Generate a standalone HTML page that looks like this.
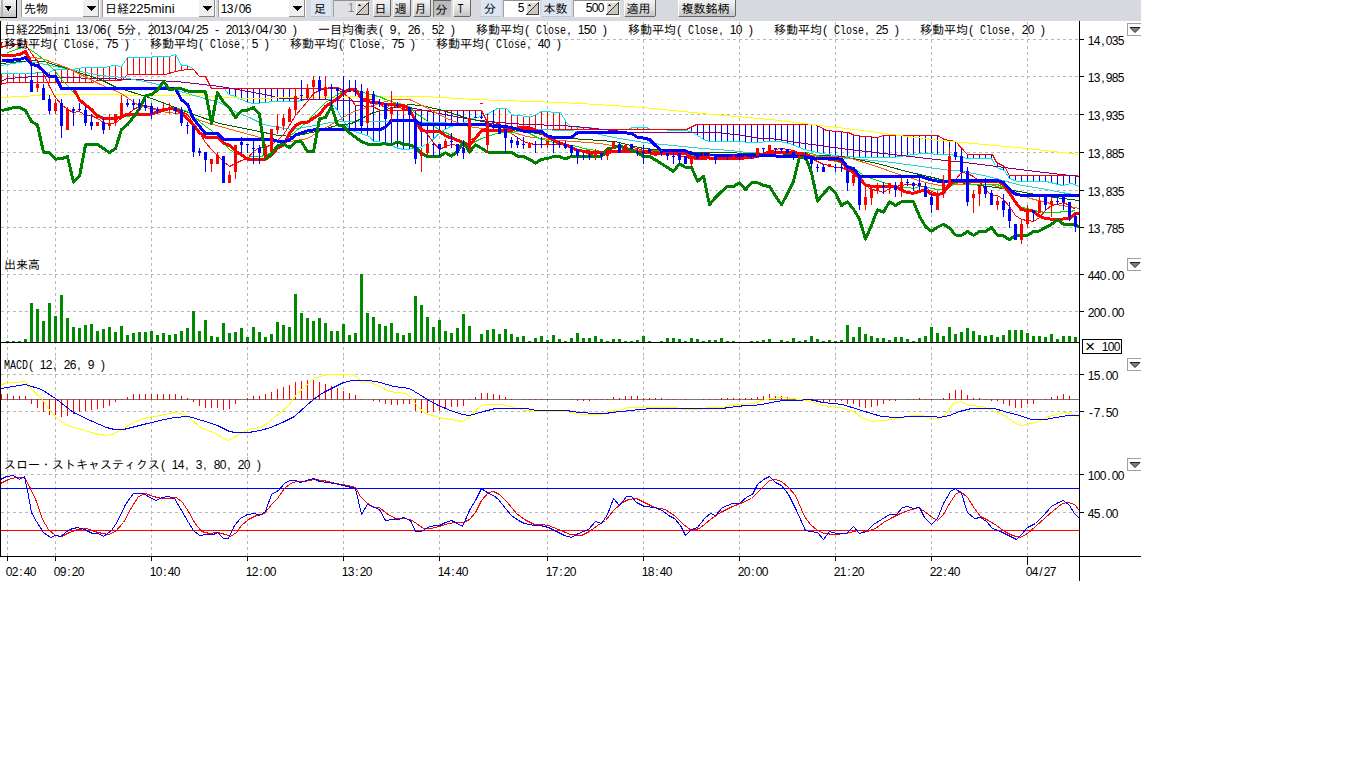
<!DOCTYPE html><html lang="ja"><head><meta charset="utf-8"><title>chart</title>
<style>html,body{margin:0;padding:0;background:#fff;overflow:hidden}svg{display:block}text{font-family:"Liberation Mono","IPAGothic",monospace;font-size:12px;white-space:pre}.dg{font-family:"Liberation Sans","IPAGothic",sans-serif;text-anchor:middle}.ls{font-family:"Liberation Sans","IPAGothic",sans-serif;font-size:13px}</style></head><body>
<svg width="1366" height="768" viewBox="0 0 1366 768" shape-rendering="crispEdges">
<defs><linearGradient id="bg" x1="0" y1="0" x2="0" y2="1"><stop offset="0" stop-color="#f4f4f4"/><stop offset="0.45" stop-color="#e2e2e2"/><stop offset="1" stop-color="#c2c2c2"/></linearGradient><linearGradient id="bgp" x1="0" y1="0" x2="0" y2="1"><stop offset="0" stop-color="#b8b8b8"/><stop offset="1" stop-color="#c4c4c4"/></linearGradient></defs>
<rect x="0" y="0" width="1141" height="21" fill="#d8d9de" />
<rect x="0" y="0" width="17" height="18" fill="url(#bg)" />
<rect x="1" y="0" width="2" height="17" fill="#b4b4b4" />
<line x1="16.5" y1="0" x2="16.5" y2="18" stroke="#000" stroke-width="1" />
<line x1="0" y1="17.5" x2="17" y2="17.5" stroke="#000" stroke-width="1" />
<polygon points="4.6,5.5 12.2,5.5 8.4,11" fill="#000"/>
<rect x="21" y="0" width="79" height="17" fill="#fff" />
<line x1="21.5" y1="0" x2="21.5" y2="17" stroke="#9a9a9a" stroke-width="1" />
<rect x="83" y="0" width="16" height="16" fill="#efefef" />
<line x1="98.5" y1="0" x2="98.5" y2="16" stroke="#8a8a8a" stroke-width="1" />
<line x1="83" y1="16.5" x2="99" y2="16.5" stroke="#8a8a8a" stroke-width="1" />
<polygon points="87,6 96,6 91.5,11" fill="#000"/>
<text y="13" fill="#000" xml:space="preserve"><tspan x="24">先物</tspan></text>
<rect x="102" y="0" width="114" height="17" fill="#fff" />
<line x1="102.5" y1="0" x2="102.5" y2="17" stroke="#9a9a9a" stroke-width="1" />
<rect x="199" y="0" width="16" height="16" fill="#efefef" />
<line x1="214.5" y1="0" x2="214.5" y2="16" stroke="#8a8a8a" stroke-width="1" />
<line x1="199" y1="16.5" x2="215" y2="16.5" stroke="#8a8a8a" stroke-width="1" />
<polygon points="203,6 212,6 207.5,11" fill="#000"/>
<text y="13" fill="#000" xml:space="preserve"><tspan x="105">日経</tspan><tspan x="129" class="ls">225mini</tspan></text>
<rect x="218" y="0" width="88" height="17" fill="#fff" />
<line x1="218.5" y1="0" x2="218.5" y2="17" stroke="#9a9a9a" stroke-width="1" />
<rect x="289" y="0" width="16" height="16" fill="#efefef" />
<line x1="304.5" y1="0" x2="304.5" y2="16" stroke="#8a8a8a" stroke-width="1" />
<line x1="289" y1="16.5" x2="305" y2="16.5" stroke="#8a8a8a" stroke-width="1" />
<polygon points="293,6 302,6 297.5,11" fill="#000"/>
<text y="13" fill="#000" xml:space="preserve"><tspan class="dg" x="224 230 236 242 248">13/06</tspan></text>
<rect x="311" y="0" width="20" height="17" fill="#dde6f3" />
<line x1="311" y1="16.5" x2="331" y2="16.5" stroke="#b5c9e3" stroke-width="1" />
<text y="13" fill="#000" xml:space="preserve"><tspan x="314">足</tspan></text>
<rect x="333" y="0" width="37" height="17" fill="#e0e0e4" />
<line x1="333" y1="0.5" x2="370" y2="0.5" stroke="#909090" stroke-width="1" />
<line x1="333.5" y1="0" x2="333.5" y2="17" stroke="#a0a0a0" stroke-width="1" />
<text y="12" fill="#888" xml:space="preserve"><tspan class="dg" x="351">1</tspan></text>
<rect x="356" y="2" width="13" height="13" fill="#dcd8d0" />
<polygon points="357,14 368,3 368,14" fill="#ccc8c0"/>
<line x1="356.5" y1="2" x2="356.5" y2="15" stroke="#fff" stroke-width="1" />
<line x1="356" y1="2.5" x2="369" y2="2.5" stroke="#fff" stroke-width="1" />
<line x1="368.5" y1="2" x2="368.5" y2="15" stroke="#404040" stroke-width="1" />
<line x1="356" y1="14.5" x2="369" y2="14.5" stroke="#404040" stroke-width="1" />
<line x1="356.5" y1="14.5" x2="368.5" y2="2.5" stroke="#303030" stroke-width="1" shape-rendering="auto"/>
<polygon points="358,6 361,6 359.5,4" fill="#000" shape-rendering="auto"/>
<rect x="373" y="0" width="18" height="17" fill="url(#bg)" />
<line x1="390.5" y1="0" x2="390.5" y2="16" stroke="#686868" stroke-width="1" />
<line x1="374" y1="16.5" x2="390" y2="16.5" stroke="#686868" stroke-width="1" />
<line x1="373.5" y1="0" x2="373.5" y2="16" stroke="#fff" stroke-width="1" />
<text y="13" fill="#000" xml:space="preserve"><tspan x="374.5">日</tspan></text>
<rect x="393" y="0" width="18" height="17" fill="url(#bg)" />
<line x1="410.5" y1="0" x2="410.5" y2="16" stroke="#686868" stroke-width="1" />
<line x1="394" y1="16.5" x2="410" y2="16.5" stroke="#686868" stroke-width="1" />
<line x1="393.5" y1="0" x2="393.5" y2="16" stroke="#fff" stroke-width="1" />
<text y="13" fill="#000" xml:space="preserve"><tspan x="394.5">週</tspan></text>
<rect x="413" y="0" width="18" height="17" fill="url(#bg)" />
<line x1="430.5" y1="0" x2="430.5" y2="16" stroke="#686868" stroke-width="1" />
<line x1="414" y1="16.5" x2="430" y2="16.5" stroke="#686868" stroke-width="1" />
<line x1="413.5" y1="0" x2="413.5" y2="16" stroke="#fff" stroke-width="1" />
<text y="13" fill="#000" xml:space="preserve"><tspan x="414.5">月</tspan></text>
<rect x="433" y="0" width="18" height="17" fill="url(#bgp)" />
<line x1="433.5" y1="0" x2="433.5" y2="17" stroke="#777" stroke-width="1" />
<line x1="433" y1="0.5" x2="451" y2="0.5" stroke="#606060" stroke-width="1" />
<text y="13.5" fill="#000" xml:space="preserve"><tspan x="435.5">分</tspan></text>
<rect x="453" y="0" width="18" height="17" fill="url(#bg)" />
<line x1="470.5" y1="0" x2="470.5" y2="16" stroke="#686868" stroke-width="1" />
<line x1="454" y1="16.5" x2="470" y2="16.5" stroke="#686868" stroke-width="1" />
<line x1="453.5" y1="0" x2="453.5" y2="16" stroke="#fff" stroke-width="1" />
<text y="13" fill="#000" xml:space="preserve"><tspan x="457.5" textLength="6" lengthAdjust="spacingAndGlyphs">T</tspan></text>
<rect x="481" y="0" width="20" height="17" fill="#dde6f3" />
<line x1="481" y1="16.5" x2="501" y2="16.5" stroke="#b5c9e3" stroke-width="1" />
<text y="13" fill="#000" xml:space="preserve"><tspan x="484">分</tspan></text>
<rect x="503" y="0" width="37" height="17" fill="#fff" />
<line x1="503" y1="0.5" x2="540" y2="0.5" stroke="#909090" stroke-width="1" />
<line x1="503.5" y1="0" x2="503.5" y2="17" stroke="#a0a0a0" stroke-width="1" />
<text y="12" fill="#000" xml:space="preserve"><tspan class="dg" x="521">5</tspan></text>
<rect x="526" y="2" width="13" height="13" fill="#dcd8d0" />
<polygon points="527,14 538,3 538,14" fill="#ccc8c0"/>
<line x1="526.5" y1="2" x2="526.5" y2="15" stroke="#fff" stroke-width="1" />
<line x1="526" y1="2.5" x2="539" y2="2.5" stroke="#fff" stroke-width="1" />
<line x1="538.5" y1="2" x2="538.5" y2="15" stroke="#404040" stroke-width="1" />
<line x1="526" y1="14.5" x2="539" y2="14.5" stroke="#404040" stroke-width="1" />
<line x1="526.5" y1="14.5" x2="538.5" y2="2.5" stroke="#303030" stroke-width="1" shape-rendering="auto"/>
<polygon points="528,6 531,6 529.5,4" fill="#000" shape-rendering="auto"/>
<rect x="542" y="0" width="29" height="17" fill="#dde6f3" />
<line x1="542" y1="16.5" x2="571" y2="16.5" stroke="#b5c9e3" stroke-width="1" />
<text y="13" fill="#000" xml:space="preserve"><tspan x="543.5">本数</tspan></text>
<rect x="573" y="0" width="47" height="17" fill="#fff" />
<line x1="573" y1="0.5" x2="620" y2="0.5" stroke="#909090" stroke-width="1" />
<line x1="573.5" y1="0" x2="573.5" y2="17" stroke="#a0a0a0" stroke-width="1" />
<text y="12" fill="#000" xml:space="preserve"><tspan class="dg" x="589 595 601">500</tspan></text>
<rect x="606" y="2" width="13" height="13" fill="#dcd8d0" />
<polygon points="607,14 618,3 618,14" fill="#ccc8c0"/>
<line x1="606.5" y1="2" x2="606.5" y2="15" stroke="#fff" stroke-width="1" />
<line x1="606" y1="2.5" x2="619" y2="2.5" stroke="#fff" stroke-width="1" />
<line x1="618.5" y1="2" x2="618.5" y2="15" stroke="#404040" stroke-width="1" />
<line x1="606" y1="14.5" x2="619" y2="14.5" stroke="#404040" stroke-width="1" />
<line x1="606.5" y1="14.5" x2="618.5" y2="2.5" stroke="#303030" stroke-width="1" shape-rendering="auto"/>
<polygon points="608,6 611,6 609.5,4" fill="#000" shape-rendering="auto"/>
<rect x="624" y="0" width="32" height="17" fill="url(#bg)" />
<line x1="655.5" y1="0" x2="655.5" y2="16" stroke="#686868" stroke-width="1" />
<line x1="625" y1="16.5" x2="655" y2="16.5" stroke="#686868" stroke-width="1" />
<line x1="624.5" y1="0" x2="624.5" y2="16" stroke="#fff" stroke-width="1" />
<text y="13" fill="#000" xml:space="preserve"><tspan x="626.5">適用</tspan></text>
<rect x="678" y="0" width="58" height="17" fill="url(#bg)" />
<line x1="735.5" y1="0" x2="735.5" y2="16" stroke="#686868" stroke-width="1" />
<line x1="679" y1="16.5" x2="735" y2="16.5" stroke="#686868" stroke-width="1" />
<line x1="678.5" y1="0" x2="678.5" y2="16" stroke="#fff" stroke-width="1" />
<text y="13" fill="#000" xml:space="preserve"><tspan x="681.5">複数銘柄</tspan></text>
<line x1="1" y1="39.5" x2="1079" y2="39.5" stroke="#b8b8b8" stroke-width="1" stroke-dasharray="3 3"/>
<line x1="1" y1="76.5" x2="1079" y2="76.5" stroke="#b8b8b8" stroke-width="1" stroke-dasharray="3 3"/>
<line x1="1" y1="114.5" x2="1079" y2="114.5" stroke="#b8b8b8" stroke-width="1" stroke-dasharray="3 3"/>
<line x1="1" y1="152.5" x2="1079" y2="152.5" stroke="#b8b8b8" stroke-width="1" stroke-dasharray="3 3"/>
<line x1="1" y1="190.5" x2="1079" y2="190.5" stroke="#b8b8b8" stroke-width="1" stroke-dasharray="3 3"/>
<line x1="1" y1="227.5" x2="1079" y2="227.5" stroke="#b8b8b8" stroke-width="1" stroke-dasharray="3 3"/>
<line x1="1" y1="274.5" x2="1079" y2="274.5" stroke="#b8b8b8" stroke-width="1" stroke-dasharray="3 3"/>
<line x1="1" y1="311.5" x2="1079" y2="311.5" stroke="#b8b8b8" stroke-width="1" stroke-dasharray="3 3"/>
<line x1="1" y1="374.5" x2="1079" y2="374.5" stroke="#b8b8b8" stroke-width="1" stroke-dasharray="3 3"/>
<line x1="1" y1="411.5" x2="1079" y2="411.5" stroke="#b8b8b8" stroke-width="1" stroke-dasharray="3 3"/>
<line x1="1" y1="474.5" x2="1079" y2="474.5" stroke="#b8b8b8" stroke-width="1" stroke-dasharray="3 3"/>
<line x1="1" y1="512.5" x2="1079" y2="512.5" stroke="#b8b8b8" stroke-width="1" stroke-dasharray="3 3"/>
<line x1="7.5" y1="22" x2="7.5" y2="256" stroke="#b8b8b8" stroke-width="1" stroke-dasharray="3 3"/>
<line x1="7.5" y1="257" x2="7.5" y2="356" stroke="#b8b8b8" stroke-width="1" stroke-dasharray="3 3"/>
<line x1="7.5" y1="357" x2="7.5" y2="456" stroke="#b8b8b8" stroke-width="1" stroke-dasharray="3 3"/>
<line x1="7.5" y1="457" x2="7.5" y2="556" stroke="#b8b8b8" stroke-width="1" stroke-dasharray="3 3"/>
<line x1="55.5" y1="22" x2="55.5" y2="256" stroke="#b8b8b8" stroke-width="1" stroke-dasharray="3 3"/>
<line x1="55.5" y1="257" x2="55.5" y2="356" stroke="#b8b8b8" stroke-width="1" stroke-dasharray="3 3"/>
<line x1="55.5" y1="357" x2="55.5" y2="456" stroke="#b8b8b8" stroke-width="1" stroke-dasharray="3 3"/>
<line x1="55.5" y1="457" x2="55.5" y2="556" stroke="#b8b8b8" stroke-width="1" stroke-dasharray="3 3"/>
<line x1="151.5" y1="22" x2="151.5" y2="256" stroke="#b8b8b8" stroke-width="1" stroke-dasharray="3 3"/>
<line x1="151.5" y1="257" x2="151.5" y2="356" stroke="#b8b8b8" stroke-width="1" stroke-dasharray="3 3"/>
<line x1="151.5" y1="357" x2="151.5" y2="456" stroke="#b8b8b8" stroke-width="1" stroke-dasharray="3 3"/>
<line x1="151.5" y1="457" x2="151.5" y2="556" stroke="#b8b8b8" stroke-width="1" stroke-dasharray="3 3"/>
<line x1="247.5" y1="22" x2="247.5" y2="256" stroke="#b8b8b8" stroke-width="1" stroke-dasharray="3 3"/>
<line x1="247.5" y1="257" x2="247.5" y2="356" stroke="#b8b8b8" stroke-width="1" stroke-dasharray="3 3"/>
<line x1="247.5" y1="357" x2="247.5" y2="456" stroke="#b8b8b8" stroke-width="1" stroke-dasharray="3 3"/>
<line x1="247.5" y1="457" x2="247.5" y2="556" stroke="#b8b8b8" stroke-width="1" stroke-dasharray="3 3"/>
<line x1="343.5" y1="22" x2="343.5" y2="256" stroke="#b8b8b8" stroke-width="1" stroke-dasharray="3 3"/>
<line x1="343.5" y1="257" x2="343.5" y2="356" stroke="#b8b8b8" stroke-width="1" stroke-dasharray="3 3"/>
<line x1="343.5" y1="357" x2="343.5" y2="456" stroke="#b8b8b8" stroke-width="1" stroke-dasharray="3 3"/>
<line x1="343.5" y1="457" x2="343.5" y2="556" stroke="#b8b8b8" stroke-width="1" stroke-dasharray="3 3"/>
<line x1="439.5" y1="22" x2="439.5" y2="256" stroke="#b8b8b8" stroke-width="1" stroke-dasharray="3 3"/>
<line x1="439.5" y1="257" x2="439.5" y2="356" stroke="#b8b8b8" stroke-width="1" stroke-dasharray="3 3"/>
<line x1="439.5" y1="357" x2="439.5" y2="456" stroke="#b8b8b8" stroke-width="1" stroke-dasharray="3 3"/>
<line x1="439.5" y1="457" x2="439.5" y2="556" stroke="#b8b8b8" stroke-width="1" stroke-dasharray="3 3"/>
<line x1="547.5" y1="22" x2="547.5" y2="256" stroke="#b8b8b8" stroke-width="1" stroke-dasharray="3 3"/>
<line x1="547.5" y1="257" x2="547.5" y2="356" stroke="#b8b8b8" stroke-width="1" stroke-dasharray="3 3"/>
<line x1="547.5" y1="357" x2="547.5" y2="456" stroke="#b8b8b8" stroke-width="1" stroke-dasharray="3 3"/>
<line x1="547.5" y1="457" x2="547.5" y2="556" stroke="#b8b8b8" stroke-width="1" stroke-dasharray="3 3"/>
<line x1="643.5" y1="22" x2="643.5" y2="256" stroke="#b8b8b8" stroke-width="1" stroke-dasharray="3 3"/>
<line x1="643.5" y1="257" x2="643.5" y2="356" stroke="#b8b8b8" stroke-width="1" stroke-dasharray="3 3"/>
<line x1="643.5" y1="357" x2="643.5" y2="456" stroke="#b8b8b8" stroke-width="1" stroke-dasharray="3 3"/>
<line x1="643.5" y1="457" x2="643.5" y2="556" stroke="#b8b8b8" stroke-width="1" stroke-dasharray="3 3"/>
<line x1="739.5" y1="22" x2="739.5" y2="256" stroke="#b8b8b8" stroke-width="1" stroke-dasharray="3 3"/>
<line x1="739.5" y1="257" x2="739.5" y2="356" stroke="#b8b8b8" stroke-width="1" stroke-dasharray="3 3"/>
<line x1="739.5" y1="357" x2="739.5" y2="456" stroke="#b8b8b8" stroke-width="1" stroke-dasharray="3 3"/>
<line x1="739.5" y1="457" x2="739.5" y2="556" stroke="#b8b8b8" stroke-width="1" stroke-dasharray="3 3"/>
<line x1="835.5" y1="22" x2="835.5" y2="256" stroke="#b8b8b8" stroke-width="1" stroke-dasharray="3 3"/>
<line x1="835.5" y1="257" x2="835.5" y2="356" stroke="#b8b8b8" stroke-width="1" stroke-dasharray="3 3"/>
<line x1="835.5" y1="357" x2="835.5" y2="456" stroke="#b8b8b8" stroke-width="1" stroke-dasharray="3 3"/>
<line x1="835.5" y1="457" x2="835.5" y2="556" stroke="#b8b8b8" stroke-width="1" stroke-dasharray="3 3"/>
<line x1="931.5" y1="22" x2="931.5" y2="256" stroke="#b8b8b8" stroke-width="1" stroke-dasharray="3 3"/>
<line x1="931.5" y1="257" x2="931.5" y2="356" stroke="#b8b8b8" stroke-width="1" stroke-dasharray="3 3"/>
<line x1="931.5" y1="357" x2="931.5" y2="456" stroke="#b8b8b8" stroke-width="1" stroke-dasharray="3 3"/>
<line x1="931.5" y1="457" x2="931.5" y2="556" stroke="#b8b8b8" stroke-width="1" stroke-dasharray="3 3"/>
<line x1="1027.5" y1="22" x2="1027.5" y2="256" stroke="#b8b8b8" stroke-width="1" stroke-dasharray="3 3"/>
<line x1="1027.5" y1="257" x2="1027.5" y2="356" stroke="#b8b8b8" stroke-width="1" stroke-dasharray="3 3"/>
<line x1="1027.5" y1="357" x2="1027.5" y2="456" stroke="#b8b8b8" stroke-width="1" stroke-dasharray="3 3"/>
<line x1="1027.5" y1="457" x2="1027.5" y2="556" stroke="#b8b8b8" stroke-width="1" stroke-dasharray="3 3"/>
<clipPath id="cp"><rect x="1" y="21" width="1078" height="536"/></clipPath>
<g clip-path="url(#cp)">
<path d="M1.5 73.7V84.2M7.5 73.7V82.4M13.5 73.7V82.4M19.5 73.6V82.4M25.5 73.6V82.4M31.5 73.6V82.4M37.5 72.2V82.4M43.5 72.2V82.4M49.5 71.6V82.4M55.5 69.2V82.4M61.5 69.2V82.4M67.5 69.2V82.4M73.5 69.0V82.4M79.5 67.8V82.4M85.5 67.0V82.4M91.5 67.0V82.4M97.5 67.0V80.1M103.5 67.0V80.1M109.5 65.9V80.1M115.5 65.4V80.1M121.5 66.1V80.1M127.5 57.7V74.4M133.5 57.6V74.4M139.5 57.5V74.4M145.5 57.4V74.4M151.5 57.2V74.4M157.5 56.2V74.4M163.5 56.2V74.4M169.5 56.0V73.2M175.5 54.9V71.4M181.5 65.2V70.8M187.5 65.4V69.2" stroke="#f00" stroke-width="1" fill="none"/>
<path d="M229.5 88.5V94.5M235.5 88.5V96.7M241.5 88.5V99.3M247.5 88.5V102.3M253.5 88.5V103.9M259.5 88.5V103.4M265.5 88.5V102.8M271.5 88.5V101.5M277.5 88.5V101.3M283.5 88.5V101.2M289.5 88.5V101.2M295.5 88.5V101.0M301.5 88.5V100.5M307.5 88.5V99.9M313.5 88.5V99.9M319.5 88.5V99.9M325.5 88.5V99.9M331.5 88.5V104.0M337.5 89.6V111.0M343.5 93.8V122.1M349.5 98.0V128.9M355.5 105.7V132.1M361.5 106.0V134.0M367.5 106.3V136.0M373.5 107.2V141.6M379.5 110.2V141.9M385.5 110.5V142.3M391.5 110.5V145.5M397.5 110.5V148.1M403.5 110.5V149.1M409.5 110.5V148.7M415.5 110.5V148.4M421.5 110.5V146.2M427.5 110.5V143.4M433.5 110.5V138.4M439.5 110.5V133.2M445.5 110.5V129.1M451.5 110.5V126.0M457.5 110.5V124.5M463.5 110.5V122.6M469.5 110.5V119.2M475.5 110.5V117.3M481.5 111.5V115.9M487.5 114.1V123.2" stroke="#00f" stroke-width="1" fill="none"/>
<path d="M493.5 110.8V125.3M499.5 108.8V126.7M505.5 108.8V128.3M511.5 114.9V129.3M517.5 115.6V129.3M523.5 115.8V129.3M529.5 116.0V129.3M535.5 114.4V129.3M541.5 111.7V129.3M547.5 112.0V129.3M553.5 112.2V129.3M559.5 112.5V129.3M565.5 121.9V129.3M571.5 126.6V129.3M577.5 127.5V129.3M583.5 127.6V129.3M589.5 127.1V129.3" stroke="#f00" stroke-width="1" fill="none"/>
<path d="M631.5 127.7V129.3M637.5 127.5V129.3M643.5 127.5V129.3" stroke="#f00" stroke-width="1" fill="none"/>
<path d="M691.5 126.5V131.5M697.5 124.2V135.7M703.5 124.2V139.7M709.5 124.2V141.7M715.5 124.2V141.7M721.5 124.2V141.7M727.5 124.2V141.7M733.5 124.2V141.7M739.5 124.2V141.7M745.5 124.2V142.4M751.5 124.2V142.4M757.5 124.2V142.2M763.5 124.2V142.1M769.5 124.2V141.9M775.5 124.2V141.8M781.5 124.2V142.2M787.5 124.2V143.6M793.5 124.2V145.4M799.5 124.2V147.5M805.5 124.2V149.4M811.5 124.2V150.9M817.5 125.5V152.4M823.5 128.7V153.7M829.5 130.3V154.5M835.5 130.9V155.2M841.5 131.5V156.0M847.5 132.1V156.5M853.5 135.6V156.9M859.5 136.2V157.3M865.5 136.6V157.5M871.5 137.0V157.4M877.5 137.1V157.3M883.5 135.1V157.2M889.5 135.1V157.1M895.5 135.2V156.7M901.5 135.2V156.1M907.5 135.2V155.4M913.5 135.3V154.5M919.5 135.3V153.6M925.5 135.3V153.6M931.5 135.4V154.0M937.5 135.7V154.3M943.5 139.1V154.6M949.5 140.4V154.0M955.5 141.6V155.4M961.5 148.0V157.0M967.5 154.0V158.4M973.5 154.0V158.4M979.5 154.0V158.4M985.5 154.0V158.4M991.5 154.0V159.2M997.5 163.2V168.2M1003.5 166.2V170.0M1009.5 175.3V179.0M1015.5 175.3V180.7M1021.5 175.3V181.2M1027.5 175.3V181.3M1033.5 175.3V181.4M1039.5 175.3V181.5M1045.5 175.3V181.6M1051.5 175.3V182.9M1057.5 175.3V184.3M1063.5 175.3V185.2M1069.5 175.3V183.7M1075.5 175.3V184.9" stroke="#00f" stroke-width="1" fill="none"/>
<polyline points="0.5,73.5 33.5,73.5 37.5,72.5 48.5,72.5 55.5,69.5 72.5,69.5 83.5,67.5 104.5,67.5 113.5,65.5 121.5,66.5 127.5,57.5 151.5,57.5 153.5,56.5 169.5,56.5 175.5,54.5 181.5,65.5 187.5,65.5 192.5,68.5 193.5,69.5 199.5,76.5 205.5,76.5 211.5,88.5 224.5,88.5 228.5,94.5 235.5,96.5 241.5,99.5 248.5,102.5 253.5,103.5 266.5,102.5 272.5,101.5 295.5,101.5 307.5,99.5 328.5,99.5 338.5,111.5 342.5,120.5 351.5,130.5 369.5,136.5 373.5,141.5 386.5,142.5 395.5,147.5 403.5,149.5 417.5,148.5 428.5,143.5 441.5,131.5 450.5,126.5 462.5,123.5 471.5,118.5 481.5,116.5 488.5,113.5 497.5,108.5 506.5,108.5 512.5,115.5 532.5,116.5 541.5,111.5 560.5,112.5 566.5,122.5 570.5,126.5 580.5,127.5 590.5,127.5 595.5,129.5 628.5,129.5 632.5,127.5 646.5,127.5 650.5,129.5 683.5,130.5 691.5,131.5 703.5,139.5 709.5,141.5 743.5,141.5 746.5,142.5 779.5,141.5 789.5,143.5 804.5,149.5 821.5,153.5 842.5,156.5 862.5,157.5 892.5,157.5 906.5,155.5 921.5,153.5 943.5,154.5 950.5,154.5 967.5,158.5 991.5,158.5 996.5,167.5 1004.5,170.5 1009.5,178.5 1017.5,181.5 1046.5,181.5 1062.5,185.5 1071.5,183.5 1079.5,186.5" fill="none" stroke="#00e8e8" stroke-width="1" shape-rendering="crispEdges"/>
<polyline points="0.5,84.5 7.5,82.5 92.5,82.5 97.5,80.5 121.5,80.5 127.5,74.5 165.5,74.5 175.5,71.5 181.5,70.5 187.5,69.5 193.5,69.5 199.5,76.5 205.5,76.5 211.5,88.5 336.5,88.5 350.5,98.5 355.5,105.5 372.5,106.5 380.5,110.5 481.5,110.5 488.5,124.5 497.5,126.5 509.5,129.5 686.5,129.5 696.5,124.5 815.5,124.5 826.5,130.5 848.5,132.5 854.5,135.5 877.5,137.5 883.5,135.5 937.5,135.5 944.5,139.5 955.5,141.5 967.5,154.5 992.5,154.5 996.5,162.5 1004.5,166.5 1009.5,175.5 1076.5,175.5 1079.5,176.5" fill="none" stroke="#ff0000" stroke-width="1" shape-rendering="crispEdges"/>
<polyline points="0.5,81.5 7.5,78.5 22.5,77.5 34.5,76.5 60.5,77.5 100.5,78.5 132.5,79.5 176.5,81.5 220.5,86.5 264.5,94.5 281.5,98.5 316.5,99.5 363.5,101.5 409.5,107.5 439.5,113.5 471.5,119.5 497.5,122.5 526.5,124.5 560.5,125.5 575.5,126.5 631.5,132.5 672.5,132.5 716.5,132.5 743.5,135.5 759.5,138.5 770.5,138.5 804.5,143.5 848.5,149.5 892.5,154.5 936.5,159.5 973.5,163.5 1027.5,170.5 1061.5,174.5 1079.5,176.5" fill="none" stroke="#800080" stroke-width="1" shape-rendering="crispEdges"/>
<polyline points="0.5,97.5 20.5,96.5 39.5,95.5 41.5,94.5 124.5,94.5 126.5,95.5 201.5,95.5 228.5,97.5 249.5,98.5 300.5,97.5 390.5,96.5 424.5,96.5 474.5,99.5 532.5,101.5 580.5,103.5 643.5,107.5 702.5,113.5 770.5,119.5 862.5,130.5 906.5,136.5 950.5,141.5 973.5,143.5 1027.5,148.5 1079.5,154.5" fill="none" stroke="#ffff00" stroke-width="1" shape-rendering="crispEdges"/>
<polyline points="0.5,65.5 25.5,61.5 35.5,62.5 100.5,75.5 123.5,77.5 154.5,83.5 190.5,94.5 219.5,102.5 234.5,111.5 249.5,117.5 263.5,124.5 278.5,127.5 292.5,129.5 314.5,125.5 336.5,121.5 390.5,121.5 402.5,121.5 439.5,122.5 468.5,124.5 500.5,127.5 540.5,129.5 585.5,131.5 614.5,137.5 643.5,142.5 672.5,145.5 702.5,148.5 731.5,150.5 746.5,152.5 800.5,154.5 862.5,159.5 892.5,162.5 921.5,166.5 950.5,170.5 958.5,170.5 988.5,176.5 1017.5,184.5 1046.5,189.5 1061.5,192.5 1079.5,195.5" fill="none" stroke="#30d0d0" stroke-width="1" shape-rendering="crispEdges"/>
<polyline points="0.5,63.5 31.5,60.5 44.5,61.5 100.5,79.5 114.5,86.5 154.5,99.5 190.5,113.5 219.5,123.5 249.5,129.5 278.5,135.5 292.5,136.5 316.5,131.5 336.5,125.5 351.5,123.5 373.5,112.5 390.5,108.5 409.5,104.5 420.5,105.5 439.5,109.5 468.5,118.5 482.5,121.5 526.5,131.5 541.5,134.5 556.5,138.5 570.5,138.5 585.5,139.5 614.5,141.5 643.5,148.5 680.5,151.5 702.5,152.5 770.5,153.5 842.5,156.5 877.5,163.5 906.5,171.5 928.5,176.5 944.5,180.5 973.5,184.5 1002.5,188.5 1024.5,192.5 1046.5,196.5 1079.5,200.5" fill="none" stroke="#006000" stroke-width="1" shape-rendering="crispEdges"/>
<polyline points="0.5,61.5 31.5,57.5 41.5,58.5 66.5,67.5 100.5,84.5 121.5,93.5 138.5,105.5 161.5,111.5 183.5,114.5 209.5,123.5 234.5,130.5 256.5,136.5 270.5,140.5 290.5,141.5 307.5,138.5 317.5,132.5 336.5,121.5 351.5,112.5 366.5,107.5 392.5,99.5 409.5,99.5 424.5,106.5 446.5,118.5 468.5,126.5 482.5,128.5 510.5,131.5 526.5,136.5 541.5,138.5 560.5,140.5 600.5,143.5 640.5,150.5 690.5,153.5 720.5,155.5 770.5,155.5 800.5,155.5 830.5,156.5 845.5,157.5 851.5,158.5 873.5,165.5 899.5,174.5 912.5,178.5 925.5,182.5 940.5,185.5 960.5,184.5 990.5,184.5 1010.5,190.5 1030.5,198.5 1050.5,203.5 1079.5,208.5" fill="none" stroke="#ff6000" stroke-width="1" shape-rendering="crispEdges"/>
<polyline points="7.5,52.5 13.5,50.5 19.5,48.5 25.5,46.5 31.5,50.5 37.5,54.5 43.5,59.5 49.5,65.5 55.5,71.5 61.5,79.5 67.5,85.5 73.5,92.5 79.5,98.5 85.5,106.5 91.5,110.5 97.5,114.5 103.5,117.5 109.5,118.5 115.5,119.5 121.5,117.5 127.5,116.5 133.5,115.5 139.5,115.5 145.5,114.5 151.5,113.5 157.5,111.5 163.5,109.5 169.5,108.5 175.5,107.5 181.5,109.5 187.5,111.5 193.5,116.5 199.5,121.5 205.5,126.5 211.5,130.5 217.5,135.5 223.5,142.5 229.5,149.5 235.5,153.5 241.5,155.5 247.5,157.5 253.5,156.5 259.5,156.5 265.5,155.5 271.5,152.5 277.5,149.5 283.5,143.5 289.5,136.5 295.5,131.5 301.5,126.5 307.5,121.5 313.5,114.5 319.5,108.5 325.5,102.5 331.5,98.5 337.5,94.5 343.5,91.5 349.5,90.5 355.5,89.5 361.5,92.5 367.5,93.5 373.5,95.5 379.5,96.5 385.5,99.5 391.5,101.5 397.5,103.5 403.5,104.5 409.5,106.5 415.5,113.5 421.5,116.5 427.5,121.5 433.5,125.5 439.5,130.5 445.5,132.5 451.5,135.5 457.5,140.5 463.5,145.5 469.5,145.5 475.5,141.5 481.5,138.5 487.5,136.5 493.5,134.5 499.5,132.5 505.5,132.5 511.5,132.5 517.5,131.5 523.5,131.5 529.5,133.5 535.5,136.5 541.5,139.5 547.5,140.5 553.5,142.5 559.5,143.5 565.5,144.5 571.5,145.5 577.5,146.5 583.5,148.5 589.5,149.5 595.5,150.5 601.5,151.5 607.5,151.5 613.5,151.5 619.5,152.5 625.5,152.5 631.5,151.5 637.5,151.5 643.5,150.5 649.5,150.5 655.5,150.5 661.5,150.5 667.5,150.5 673.5,152.5 679.5,153.5 685.5,154.5 691.5,155.5 697.5,156.5 703.5,156.5 709.5,157.5 715.5,157.5 721.5,158.5 727.5,158.5 733.5,158.5 739.5,157.5 745.5,157.5 751.5,157.5 757.5,156.5 763.5,155.5 769.5,154.5 775.5,153.5 781.5,152.5 787.5,151.5 793.5,152.5 799.5,152.5 805.5,152.5 811.5,153.5 817.5,155.5 823.5,157.5 829.5,159.5 835.5,161.5 841.5,162.5 847.5,165.5 853.5,167.5 859.5,172.5 865.5,176.5 871.5,178.5 877.5,180.5 883.5,182.5 889.5,184.5 895.5,186.5 901.5,187.5 907.5,187.5 913.5,188.5 919.5,186.5 925.5,186.5 931.5,188.5 937.5,189.5 943.5,189.5 949.5,186.5 955.5,183.5 961.5,182.5 967.5,183.5 973.5,184.5 979.5,184.5 985.5,184.5 991.5,184.5 997.5,184.5 1003.5,187.5 1009.5,194.5 1015.5,202.5 1021.5,207.5 1027.5,208.5 1033.5,210.5 1039.5,211.5 1045.5,212.5 1051.5,212.5 1057.5,212.5 1063.5,211.5 1069.5,211.5 1075.5,210.5" fill="none" stroke="#00e000" stroke-width="1" shape-rendering="crispEdges"/>
<polyline points="0.5,47.5 7.5,45.5 13.5,44.5 19.5,44.5 25.5,44.5 31.5,53.5 37.5,61.5 43.5,73.5 49.5,86.5 55.5,97.5 61.5,104.5 67.5,109.5 73.5,112.5 79.5,111.5 85.5,115.5 91.5,115.5 97.5,118.5 103.5,122.5 109.5,124.5 115.5,122.5 121.5,118.5 127.5,114.5 133.5,109.5 139.5,106.5 145.5,105.5 151.5,107.5 157.5,109.5 163.5,109.5 169.5,109.5 175.5,110.5 181.5,111.5 187.5,114.5 193.5,123.5 199.5,132.5 205.5,142.5 211.5,149.5 217.5,155.5 223.5,161.5 229.5,166.5 235.5,163.5 241.5,160.5 247.5,158.5 253.5,151.5 259.5,147.5 265.5,147.5 271.5,144.5 277.5,140.5 283.5,134.5 289.5,125.5 295.5,115.5 301.5,108.5 307.5,101.5 313.5,93.5 319.5,90.5 325.5,88.5 331.5,87.5 337.5,87.5 343.5,90.5 349.5,90.5 355.5,91.5 361.5,98.5 367.5,98.5 373.5,100.5 379.5,103.5 385.5,108.5 391.5,104.5 397.5,107.5 403.5,108.5 409.5,110.5 415.5,118.5 421.5,127.5 427.5,134.5 433.5,142.5 439.5,149.5 445.5,146.5 451.5,144.5 457.5,145.5 463.5,147.5 469.5,141.5 475.5,136.5 481.5,131.5 487.5,126.5 493.5,121.5 499.5,124.5 505.5,128.5 511.5,133.5 517.5,137.5 523.5,141.5 529.5,143.5 535.5,144.5 541.5,144.5 547.5,144.5 553.5,144.5 559.5,144.5 565.5,145.5 571.5,146.5 577.5,149.5 583.5,151.5 589.5,154.5 595.5,155.5 601.5,155.5 607.5,154.5 613.5,151.5 619.5,150.5 625.5,149.5 631.5,147.5 637.5,148.5 643.5,150.5 649.5,150.5 655.5,151.5 661.5,152.5 667.5,153.5 673.5,154.5 679.5,155.5 685.5,157.5 691.5,158.5 697.5,159.5 703.5,159.5 709.5,158.5 715.5,157.5 721.5,157.5 727.5,157.5 733.5,157.5 739.5,157.5 745.5,156.5 751.5,156.5 757.5,154.5 763.5,153.5 769.5,151.5 775.5,149.5 781.5,148.5 787.5,149.5 793.5,150.5 799.5,153.5 805.5,155.5 811.5,158.5 817.5,161.5 823.5,164.5 829.5,165.5 835.5,167.5 841.5,167.5 847.5,170.5 853.5,171.5 859.5,179.5 865.5,185.5 871.5,189.5 877.5,190.5 883.5,192.5 889.5,188.5 895.5,186.5 901.5,185.5 907.5,184.5 913.5,184.5 919.5,185.5 925.5,187.5 931.5,191.5 937.5,193.5 943.5,193.5 949.5,187.5 955.5,179.5 961.5,172.5 967.5,173.5 973.5,176.5 979.5,181.5 985.5,189.5 991.5,195.5 997.5,195.5 1003.5,199.5 1009.5,206.5 1015.5,215.5 1021.5,219.5 1027.5,220.5 1033.5,221.5 1039.5,217.5 1045.5,210.5 1051.5,205.5 1057.5,204.5 1063.5,202.5 1069.5,205.5 1075.5,209.5" fill="none" stroke="#ff0000" stroke-width="1" shape-rendering="crispEdges"/>
<polyline points="1.5,56.0 7.5,55.6 13.5,55.2 19.5,54.7 25.5,51.2 31.5,64.0 37.5,66.0 43.5,71.0 49.5,76.5 55.5,76.5 61.5,88.0 67.5,88.5 73.5,88.5 79.5,99.8 85.5,105.0 91.5,109.5 97.5,115.9 103.5,118.5 109.5,118.5 115.5,118.5 121.5,117.0 127.5,114.0 133.5,114.0 139.5,114.0 145.5,114.0 151.5,114.0 157.5,112.0 163.5,110.0 169.5,108.6 175.5,109.3 181.5,113.0 187.5,118.8 193.5,124.8 199.5,132.8 205.5,137.2 211.5,137.2 217.5,137.2 223.5,143.1 229.5,145.3 235.5,151.1 241.5,154.8 247.5,159.2 253.5,159.2 259.5,159.2 265.5,159.2 271.5,155.2 277.5,148.2 283.5,145.3 289.5,133.6 295.5,125.5 301.5,122.6 307.5,122.1 313.5,118.2 319.5,114.5 325.5,106.5 331.5,102.8 337.5,98.4 343.5,93.3 349.5,89.3 355.5,89.3 361.5,98.4 367.5,101.4 373.5,102.8 379.5,102.8 385.5,104.4 391.5,104.8 397.5,105.1 403.5,105.4 409.5,108.8 415.5,121.2 421.5,130.8 427.5,131.2 433.5,131.2 439.5,131.2 445.5,135.9 451.5,138.1 457.5,140.3 463.5,142.5 469.5,145.4 475.5,138.1 481.5,130.8 487.5,130.8 493.5,130.8 499.5,130.8 505.5,130.8 511.5,130.8 517.5,127.8 523.5,127.8 529.5,127.8 535.5,130.0 541.5,133.0 547.5,136.6 553.5,140.3 559.5,143.2 565.5,144.7 571.5,147.6 577.5,150.5 583.5,151.2 589.5,152.0 595.5,152.7 601.5,152.7 607.5,152.0 613.5,151.2 619.5,151.2 625.5,151.2 631.5,151.2 637.5,152.0 643.5,152.7 649.5,153.0 655.5,153.4 661.5,153.0 667.5,153.0 673.5,153.0 679.5,153.0 685.5,153.0 691.5,157.8 697.5,157.9 703.5,157.9 709.5,158.0 715.5,158.9 721.5,158.9 727.5,158.9 733.5,158.9 739.5,158.9 745.5,157.8 751.5,157.3 757.5,156.4 763.5,154.2 769.5,152.0 775.5,152.3 781.5,152.7 787.5,152.7 793.5,152.7 799.5,153.4 805.5,154.2 811.5,157.0 817.5,158.6 823.5,158.8 829.5,159.1 835.5,159.3 841.5,161.5 847.5,168.8 853.5,172.5 859.5,178.3 865.5,184.9 871.5,186.4 877.5,186.4 883.5,186.4 889.5,186.4 895.5,186.4 901.5,190.0 907.5,192.7 913.5,193.2 919.5,191.4 925.5,189.9 931.5,194.3 937.5,195.0 943.5,192.8 949.5,184.0 955.5,181.0 961.5,181.0 967.5,181.0 973.5,181.0 979.5,181.0 985.5,181.0 991.5,181.0 997.5,181.0 1003.5,184.8 1009.5,192.8 1015.5,202.3 1021.5,209.7 1027.5,210.4 1033.5,211.1 1039.5,216.3 1045.5,218.5 1051.5,219.2 1057.5,219.1 1063.5,219.0 1069.5,218.5 1075.5,213.3 1081.5,214.0" fill="none" stroke="#ff0000" stroke-width="3" shape-rendering="crispEdges" stroke-linejoin="round"/>
<polyline points="1.5,60.0 7.5,60.0 13.5,60.0 19.5,59.5 25.5,57.5 31.5,64.5 37.5,65.5 43.5,71.0 49.5,76.5 55.5,76.5 61.5,88.5 67.5,88.5 73.5,88.5 79.5,88.5 85.5,88.5 91.5,88.5 97.5,88.5 103.5,88.5 109.5,88.5 115.5,88.5 121.5,88.5 127.5,88.5 133.5,88.5 139.5,88.5 145.5,88.5 151.5,88.5 157.5,88.5 163.5,88.5 169.5,88.5 175.5,88.5 181.5,99.8 187.5,104.5 193.5,118.9 199.5,126.2 205.5,133.6 211.5,133.6 217.5,133.6 223.5,139.4 229.5,139.4 235.5,139.4 241.5,139.4 247.5,139.4 253.5,139.4 259.5,139.4 265.5,139.4 271.5,139.4 277.5,141.2 283.5,141.2 289.5,140.2 295.5,135.0 301.5,132.8 307.5,130.9 313.5,129.9 319.5,129.9 325.5,129.9 331.5,129.9 337.5,129.9 343.5,129.9 349.5,129.9 355.5,129.9 361.5,129.9 367.5,129.9 373.5,129.9 379.5,129.9 385.5,127.1 391.5,120.5 397.5,120.5 403.5,120.5 409.5,120.5 415.5,120.5 421.5,124.9 427.5,124.9 433.5,124.9 439.5,124.9 445.5,124.9 451.5,124.9 457.5,124.9 463.5,124.9 469.5,124.9 475.5,124.9 481.5,124.9 487.5,124.9 493.5,126.4 499.5,126.4 505.5,126.4 511.5,127.8 517.5,129.3 523.5,131.2 529.5,131.2 535.5,131.2 541.5,131.5 547.5,135.9 553.5,137.6 559.5,137.4 565.5,137.3 571.5,137.1 577.5,132.9 583.5,132.9 589.5,132.9 595.5,132.9 601.5,132.9 607.5,132.9 613.5,132.9 619.5,132.9 625.5,132.9 631.5,133.4 637.5,137.3 643.5,138.1 649.5,139.5 655.5,145.4 661.5,150.5 667.5,150.5 673.5,150.5 679.5,150.5 685.5,151.0 691.5,153.4 697.5,154.9 703.5,154.9 709.5,155.0 715.5,155.0 721.5,155.1 727.5,155.1 733.5,155.2 739.5,155.2 745.5,155.2 751.5,155.3 757.5,155.3 763.5,155.4 769.5,155.4 775.5,156.0 781.5,156.0 787.5,156.0 793.5,156.0 799.5,156.4 805.5,157.1 811.5,157.8 817.5,158.6 823.5,158.6 829.5,158.6 835.5,158.6 841.5,159.3 847.5,167.3 853.5,168.4 859.5,176.6 865.5,176.6 871.5,176.5 877.5,176.5 883.5,176.5 889.5,176.4 895.5,176.4 901.5,176.4 907.5,176.4 913.5,176.3 919.5,176.3 925.5,178.2 931.5,179.9 937.5,181.1 943.5,182.0 949.5,181.0 955.5,180.4 961.5,180.4 967.5,180.4 973.5,180.4 979.5,180.4 985.5,180.4 991.5,180.4 997.5,180.4 1003.5,182.6 1009.5,189.2 1015.5,194.3 1021.5,195.3 1027.5,195.3 1033.5,195.3 1039.5,195.3 1045.5,195.3 1051.5,195.3 1057.5,195.3 1063.5,195.3 1069.5,195.3 1075.5,195.3 1081.5,195.3" fill="none" stroke="#0000ff" stroke-width="3" shape-rendering="crispEdges" stroke-linejoin="round"/>
<polyline points="1.5,110.5 7.5,109.3 13.5,107.6 19.5,107.6 25.5,110.5 31.5,121.5 37.5,125.1 43.5,152.2 49.5,152.7 55.5,159.1 61.5,158.8 67.5,156.6 73.5,182.0 79.5,176.4 85.5,144.9 91.5,144.5 97.5,144.5 103.5,148.6 109.5,152.7 115.5,148.6 121.5,129.5 127.5,124.4 133.5,117.0 139.5,109.0 145.5,95.9 151.5,94.4 157.5,90.0 163.5,81.5 169.5,89.5 175.5,88.8 181.5,88.8 187.5,91.0 193.5,91.4 199.5,91.4 205.5,91.8 211.5,123.3 217.5,92.6 223.5,102.1 229.5,108.0 235.5,117.5 241.5,110.9 247.5,110.1 253.5,107.5 259.5,114.5 265.5,158.5 271.5,154.0 277.5,146.0 283.5,144.1 289.5,147.5 295.5,142.0 301.5,141.6 307.5,151.9 313.5,151.9 319.5,118.9 325.5,117.5 331.5,106.5 337.5,124.8 343.5,126.2 349.5,132.8 355.5,137.2 361.5,141.6 367.5,144.1 373.5,144.1 379.5,144.1 385.5,143.9 391.5,144.7 397.5,141.7 403.5,144.4 409.5,144.7 415.5,147.6 421.5,153.5 427.5,156.4 433.5,156.4 439.5,156.4 445.5,152.7 451.5,156.1 457.5,151.3 463.5,141.7 469.5,152.0 475.5,144.7 481.5,148.3 487.5,152.0 493.5,152.0 499.5,152.0 505.5,152.0 511.5,152.0 517.5,156.1 523.5,156.7 529.5,159.3 535.5,163.0 541.5,159.3 547.5,158.6 553.5,156.4 559.5,156.7 565.5,159.0 571.5,156.4 577.5,156.4 583.5,156.4 589.5,156.4 595.5,156.4 601.5,156.4 607.5,149.0 613.5,147.6 619.5,145.7 625.5,148.3 631.5,149.8 637.5,152.7 643.5,156.4 649.5,156.4 655.5,160.0 661.5,163.7 667.5,167.6 673.5,171.4 679.5,163.7 685.5,167.3 691.5,167.3 697.5,181.3 703.5,176.1 709.5,204.7 715.5,197.4 721.5,191.5 727.5,186.4 733.5,186.4 739.5,182.7 745.5,189.6 751.5,182.7 757.5,182.7 763.5,185.6 769.5,186.4 775.5,195.9 781.5,204.7 787.5,193.7 793.5,181.2 799.5,157.1 805.5,157.1 811.5,172.5 817.5,201.0 823.5,193.7 829.5,187.1 835.5,193.0 841.5,205.4 847.5,201.7 853.5,209.1 859.5,219.3 865.5,239.1 871.5,225.2 877.5,209.8 883.5,212.0 889.5,201.7 895.5,205.4 901.5,201.7 907.5,201.4 913.5,201.7 919.5,216.4 925.5,226.6 931.5,231.3 937.5,227.2 943.5,224.2 949.5,228.0 955.5,235.0 961.5,235.3 967.5,231.6 973.5,235.3 979.5,231.6 985.5,231.6 991.5,227.5 997.5,235.3 1003.5,236.0 1009.5,239.7 1015.5,235.3 1021.5,235.3 1027.5,235.3 1033.5,231.6 1039.5,230.9 1045.5,227.5 1051.5,224.3 1057.5,219.9 1063.5,224.3 1069.5,224.3 1075.5,224.3 1081.5,228.7" fill="none" stroke="#008000" stroke-width="3" shape-rendering="crispEdges" stroke-linejoin="round"/>
<rect x="7" y="42.0" width="1" height="1.3" fill="#0000ff"/><rect x="6" y="42.0" width="3" height="1.3" fill="#0000ff"/>
<rect x="13" y="42.6" width="1" height="3.9" fill="#ff0000"/><rect x="12" y="43.5" width="3" height="2.5" fill="#ff0000"/>
<rect x="19" y="42.8" width="1" height="3.3" fill="#0000ff"/><rect x="18" y="42.8" width="3" height="3.3" fill="#0000ff"/>
<rect x="25" y="39.0" width="1" height="5.8" fill="#ff0000"/><rect x="24" y="43.8" width="3" height="1.0" fill="#ff0000"/>
<rect x="31" y="64.9" width="1" height="26.8" fill="#0000ff"/><rect x="30" y="80.0" width="3" height="11.7" fill="#0000ff"/>
<rect x="37" y="72.0" width="1" height="19.7" fill="#ff0000"/><rect x="36" y="84.0" width="3" height="4.4" fill="#ff0000"/>
<rect x="43" y="84.4" width="1" height="15.4" fill="#0000ff"/><rect x="42" y="87.8" width="3" height="12.0" fill="#0000ff"/>
<rect x="49" y="95.4" width="1" height="19.0" fill="#0000ff"/><rect x="48" y="99.0" width="3" height="11.8" fill="#0000ff"/>
<rect x="55" y="99.0" width="1" height="15.4" fill="#ff0000"/><rect x="54" y="103.0" width="3" height="7.8" fill="#ff0000"/>
<rect x="61" y="99.0" width="1" height="38.8" fill="#0000ff"/><rect x="60" y="103.0" width="3" height="22.8" fill="#0000ff"/>
<rect x="67" y="107.0" width="1" height="22.8" fill="#ff0000"/><rect x="66" y="109.3" width="3" height="20.5" fill="#ff0000"/>
<rect x="73" y="107.0" width="1" height="18.8" fill="#0000ff"/><rect x="72" y="109.3" width="3" height="1.9" fill="#0000ff"/>
<rect x="79" y="102.7" width="1" height="8.1" fill="#0000ff"/><rect x="78" y="109.2" width="3" height="1.0" fill="#0000ff"/>
<rect x="85" y="106.4" width="1" height="19.4" fill="#0000ff"/><rect x="84" y="110.0" width="3" height="12.5" fill="#0000ff"/>
<rect x="91" y="114.4" width="1" height="15.4" fill="#0000ff"/><rect x="90" y="121.7" width="3" height="4.3" fill="#0000ff"/>
<rect x="97" y="121.7" width="1" height="4.1" fill="#ff0000"/><rect x="96" y="121.7" width="3" height="4.1" fill="#ff0000"/>
<rect x="103" y="118.0" width="1" height="15.7" fill="#0000ff"/><rect x="102" y="121.7" width="3" height="8.1" fill="#0000ff"/>
<rect x="109" y="114.4" width="1" height="15.4" fill="#ff0000"/><rect x="108" y="122.5" width="3" height="3.5" fill="#ff0000"/>
<rect x="115" y="114.4" width="1" height="11.4" fill="#ff0000"/><rect x="114" y="114.4" width="3" height="8.1" fill="#ff0000"/>
<rect x="121" y="95.4" width="1" height="22.6" fill="#ff0000"/><rect x="120" y="103.0" width="3" height="15.0" fill="#ff0000"/>
<rect x="127" y="99.0" width="1" height="8.4" fill="#0000ff"/><rect x="126" y="102.7" width="3" height="1.8" fill="#0000ff"/>
<rect x="133" y="99.0" width="1" height="11.0" fill="#0000ff"/><rect x="132" y="102.7" width="3" height="2.3" fill="#0000ff"/>
<rect x="139" y="99.0" width="1" height="11.8" fill="#0000ff"/><rect x="138" y="103.0" width="3" height="4.0" fill="#0000ff"/>
<rect x="145" y="99.0" width="1" height="11.8" fill="#0000ff"/><rect x="144" y="105.0" width="3" height="2.8" fill="#0000ff"/>
<rect x="151" y="103.0" width="1" height="15.5" fill="#0000ff"/><rect x="150" y="106.4" width="3" height="8.0" fill="#0000ff"/>
<rect x="157" y="107.0" width="1" height="7.4" fill="#0000ff"/><rect x="156" y="109.3" width="3" height="1.9" fill="#0000ff"/>
<rect x="163" y="103.4" width="1" height="8.1" fill="#ff0000"/><rect x="162" y="107.8" width="3" height="2.2" fill="#ff0000"/>
<rect x="169" y="103.0" width="1" height="11.4" fill="#ff0000"/><rect x="168" y="106.8" width="3" height="3.2" fill="#ff0000"/>
<rect x="175" y="107.4" width="1" height="7.0" fill="#0000ff"/><rect x="174" y="107.4" width="3" height="3.4" fill="#0000ff"/>
<rect x="181" y="107.0" width="1" height="18.8" fill="#0000ff"/><rect x="180" y="110.0" width="3" height="12.5" fill="#0000ff"/>
<rect x="187" y="121.7" width="1" height="12.0" fill="#0000ff"/><rect x="186" y="124.7" width="3" height="1.3" fill="#0000ff"/>
<rect x="193" y="125.8" width="1" height="30.7" fill="#0000ff"/><rect x="192" y="125.8" width="3" height="26.4" fill="#0000ff"/>
<rect x="199" y="148.2" width="1" height="8.1" fill="#0000ff"/><rect x="198" y="151.0" width="3" height="1.6" fill="#0000ff"/>
<rect x="205" y="151.9" width="1" height="19.7" fill="#0000ff"/><rect x="204" y="151.9" width="3" height="8.0" fill="#0000ff"/>
<rect x="211" y="159.2" width="1" height="12.4" fill="#ff0000"/><rect x="210" y="159.2" width="3" height="4.4" fill="#ff0000"/>
<rect x="217" y="151.9" width="1" height="11.7" fill="#ff0000"/><rect x="216" y="155.2" width="3" height="8.4" fill="#ff0000"/>
<rect x="223" y="155.8" width="1" height="26.8" fill="#0000ff"/><rect x="222" y="155.8" width="3" height="26.8" fill="#0000ff"/>
<rect x="229" y="170.9" width="1" height="11.7" fill="#ff0000"/><rect x="228" y="175.3" width="3" height="7.3" fill="#ff0000"/>
<rect x="235" y="144.5" width="1" height="34.5" fill="#ff0000"/><rect x="234" y="144.5" width="3" height="27.1" fill="#ff0000"/>
<rect x="241" y="137.2" width="1" height="15.4" fill="#0000ff"/><rect x="240" y="141.6" width="3" height="2.9" fill="#0000ff"/>
<rect x="247" y="143.8" width="1" height="8.8" fill="#0000ff"/><rect x="246" y="143.8" width="3" height="1.5" fill="#0000ff"/>
<rect x="253" y="140.9" width="1" height="22.7" fill="#0000ff"/><rect x="252" y="147.5" width="3" height="1.5" fill="#0000ff"/>
<rect x="259" y="144.5" width="1" height="19.1" fill="#0000ff"/><rect x="258" y="148.2" width="3" height="4.4" fill="#0000ff"/>
<rect x="265" y="143.8" width="1" height="15.4" fill="#ff0000"/><rect x="264" y="147.5" width="3" height="9.5" fill="#ff0000"/>
<rect x="271" y="129.2" width="1" height="22.7" fill="#ff0000"/><rect x="270" y="129.2" width="3" height="22.7" fill="#ff0000"/>
<rect x="277" y="113.8" width="1" height="19.8" fill="#ff0000"/><rect x="276" y="125.5" width="3" height="4.4" fill="#ff0000"/>
<rect x="283" y="113.8" width="1" height="16.1" fill="#ff0000"/><rect x="282" y="118.2" width="3" height="7.3" fill="#ff0000"/>
<rect x="289" y="106.5" width="1" height="15.4" fill="#ff0000"/><rect x="288" y="109.4" width="3" height="12.5" fill="#ff0000"/>
<rect x="295" y="88.9" width="1" height="25.6" fill="#ff0000"/><rect x="294" y="95.5" width="3" height="14.6" fill="#ff0000"/>
<rect x="301" y="80.1" width="1" height="21.3" fill="#0000ff"/><rect x="300" y="94.8" width="3" height="1.4" fill="#0000ff"/>
<rect x="307" y="83.8" width="1" height="14.6" fill="#ff0000"/><rect x="306" y="88.2" width="3" height="10.2" fill="#ff0000"/>
<rect x="313" y="75.7" width="1" height="23.5" fill="#ff0000"/><rect x="312" y="80.1" width="3" height="7.3" fill="#ff0000"/>
<rect x="319" y="75.7" width="1" height="22.0" fill="#0000ff"/><rect x="318" y="80.1" width="3" height="11.0" fill="#0000ff"/>
<rect x="325" y="75.7" width="1" height="22.7" fill="#ff0000"/><rect x="324" y="87.4" width="3" height="8.1" fill="#ff0000"/>
<rect x="331" y="83.8" width="1" height="22.7" fill="#0000ff"/><rect x="330" y="87.4" width="3" height="1.5" fill="#0000ff"/>
<rect x="337" y="88.2" width="1" height="21.8" fill="#0000ff"/><rect x="336" y="88.2" width="3" height="2.9" fill="#0000ff"/>
<rect x="343" y="75.7" width="1" height="20.1" fill="#0000ff"/><rect x="342" y="91.0" width="3" height="1.0" fill="#0000ff"/>
<rect x="349" y="80.4" width="1" height="11.1" fill="#0000ff"/><rect x="348" y="90.5" width="3" height="1.0" fill="#0000ff"/>
<rect x="355" y="80.4" width="1" height="15.4" fill="#0000ff"/><rect x="354" y="91.0" width="3" height="1.0" fill="#0000ff"/>
<rect x="361" y="83.8" width="1" height="41.7" fill="#0000ff"/><rect x="360" y="91.1" width="3" height="34.4" fill="#0000ff"/>
<rect x="367" y="88.2" width="1" height="37.3" fill="#ff0000"/><rect x="366" y="91.1" width="3" height="31.5" fill="#ff0000"/>
<rect x="373" y="91.1" width="1" height="16.1" fill="#0000ff"/><rect x="372" y="94.0" width="3" height="9.6" fill="#0000ff"/>
<rect x="379" y="99.0" width="1" height="8.0" fill="#0000ff"/><rect x="378" y="102.0" width="3" height="1.6" fill="#0000ff"/>
<rect x="385" y="102.9" width="1" height="16.1" fill="#0000ff"/><rect x="384" y="102.9" width="3" height="16.1" fill="#0000ff"/>
<rect x="391" y="91.2" width="1" height="30.8" fill="#ff0000"/><rect x="390" y="106.6" width="3" height="7.3" fill="#ff0000"/>
<rect x="397" y="102.0" width="1" height="6.0" fill="#0000ff"/><rect x="396" y="105.0" width="3" height="1.4" fill="#0000ff"/>
<rect x="403" y="104.4" width="1" height="10.4" fill="#ff0000"/><rect x="402" y="104.4" width="3" height="5.9" fill="#ff0000"/>
<rect x="409" y="107.3" width="1" height="7.4" fill="#0000ff"/><rect x="408" y="107.3" width="3" height="7.4" fill="#0000ff"/>
<rect x="415" y="112.5" width="1" height="51.2" fill="#0000ff"/><rect x="414" y="119.0" width="3" height="40.3" fill="#0000ff"/>
<rect x="421" y="148.3" width="1" height="23.5" fill="#ff0000"/><rect x="420" y="152.0" width="3" height="4.4" fill="#ff0000"/>
<rect x="427" y="141.0" width="1" height="15.4" fill="#ff0000"/><rect x="426" y="143.9" width="3" height="8.8" fill="#ff0000"/>
<rect x="433" y="143.0" width="1" height="13.0" fill="#0000ff"/><rect x="432" y="143.5" width="3" height="1.2" fill="#0000ff"/>
<rect x="439" y="143.9" width="1" height="12.5" fill="#0000ff"/><rect x="438" y="143.9" width="3" height="5.1" fill="#0000ff"/>
<rect x="445" y="138.8" width="1" height="9.5" fill="#ff0000"/><rect x="444" y="141.0" width="3" height="7.3" fill="#ff0000"/>
<rect x="451" y="133.0" width="1" height="15.3" fill="#0000ff"/><rect x="450" y="141.0" width="3" height="1.2" fill="#0000ff"/>
<rect x="457" y="143.9" width="1" height="12.5" fill="#0000ff"/><rect x="456" y="143.9" width="3" height="8.8" fill="#0000ff"/>
<rect x="463" y="141.0" width="1" height="18.3" fill="#0000ff"/><rect x="462" y="148.3" width="3" height="4.4" fill="#0000ff"/>
<rect x="469" y="118.3" width="1" height="33.7" fill="#ff0000"/><rect x="468" y="118.3" width="3" height="30.0" fill="#ff0000"/>
<rect x="475" y="112.5" width="1" height="5.8" fill="#0000ff"/><rect x="474" y="116.8" width="3" height="1.2" fill="#0000ff"/>
<rect x="481" y="112.5" width="1" height="6.5" fill="#0000ff"/><rect x="480" y="117.0" width="3" height="1.2" fill="#0000ff"/>
<rect x="487" y="114.7" width="1" height="38.0" fill="#ff0000"/><rect x="486" y="124.2" width="3" height="20.5" fill="#ff0000"/>
<rect x="493" y="110.3" width="1" height="19.0" fill="#0000ff"/><rect x="492" y="126.0" width="3" height="2.0" fill="#0000ff"/>
<rect x="499" y="124.2" width="1" height="9.5" fill="#0000ff"/><rect x="498" y="124.2" width="3" height="9.5" fill="#0000ff"/>
<rect x="505" y="128.6" width="1" height="24.1" fill="#0000ff"/><rect x="504" y="128.6" width="3" height="9.5" fill="#0000ff"/>
<rect x="511" y="136.6" width="1" height="11.7" fill="#0000ff"/><rect x="510" y="140.3" width="3" height="2.9" fill="#0000ff"/>
<rect x="517" y="136.6" width="1" height="11.7" fill="#0000ff"/><rect x="516" y="141.0" width="3" height="3.7" fill="#0000ff"/>
<rect x="523" y="137.3" width="1" height="11.7" fill="#0000ff"/><rect x="522" y="143.9" width="3" height="1.5" fill="#0000ff"/>
<rect x="529" y="141.7" width="1" height="6.6" fill="#ff0000"/><rect x="528" y="143.9" width="3" height="4.4" fill="#ff0000"/>
<rect x="535" y="141.0" width="1" height="11.7" fill="#0000ff"/><rect x="534" y="144.2" width="3" height="1.0" fill="#0000ff"/>
<rect x="541" y="137.3" width="1" height="11.0" fill="#0000ff"/><rect x="540" y="144.2" width="3" height="1.0" fill="#0000ff"/>
<rect x="547" y="141.4" width="1" height="6.9" fill="#ff0000"/><rect x="546" y="141.4" width="3" height="3.3" fill="#ff0000"/>
<rect x="553" y="141.0" width="1" height="11.7" fill="#0000ff"/><rect x="552" y="144.2" width="3" height="1.0" fill="#0000ff"/>
<rect x="559" y="141.0" width="1" height="7.3" fill="#0000ff"/><rect x="558" y="143.9" width="3" height="1.5" fill="#0000ff"/>
<rect x="565" y="141.0" width="1" height="8.0" fill="#0000ff"/><rect x="564" y="143.9" width="3" height="4.4" fill="#0000ff"/>
<rect x="571" y="144.7" width="1" height="11.7" fill="#0000ff"/><rect x="570" y="145.4" width="3" height="7.3" fill="#0000ff"/>
<rect x="577" y="149.0" width="1" height="14.7" fill="#0000ff"/><rect x="576" y="149.0" width="3" height="7.4" fill="#0000ff"/>
<rect x="583" y="152.7" width="1" height="7.3" fill="#0000ff"/><rect x="582" y="155.9" width="3" height="1.0" fill="#0000ff"/>
<rect x="589" y="152.7" width="1" height="7.3" fill="#0000ff"/><rect x="588" y="155.9" width="3" height="1.0" fill="#0000ff"/>
<rect x="595" y="149.0" width="1" height="11.0" fill="#ff0000"/><rect x="594" y="152.7" width="3" height="3.7" fill="#ff0000"/>
<rect x="601" y="152.7" width="1" height="7.3" fill="#0000ff"/><rect x="600" y="152.7" width="3" height="3.7" fill="#0000ff"/>
<rect x="607" y="149.0" width="1" height="11.0" fill="#ff0000"/><rect x="606" y="149.0" width="3" height="7.4" fill="#ff0000"/>
<rect x="613" y="141.7" width="1" height="7.3" fill="#ff0000"/><rect x="612" y="141.7" width="3" height="7.3" fill="#ff0000"/>
<rect x="619" y="141.7" width="1" height="11.0" fill="#0000ff"/><rect x="618" y="143.9" width="3" height="8.8" fill="#0000ff"/>
<rect x="625" y="143.9" width="1" height="8.8" fill="#ff0000"/><rect x="624" y="145.4" width="3" height="5.8" fill="#ff0000"/>
<rect x="631" y="143.9" width="1" height="5.1" fill="#0000ff"/><rect x="630" y="143.9" width="3" height="5.1" fill="#0000ff"/>
<rect x="637" y="149.0" width="1" height="7.4" fill="#0000ff"/><rect x="636" y="151.5" width="3" height="1.0" fill="#0000ff"/>
<rect x="643" y="145.4" width="1" height="18.3" fill="#0000ff"/><rect x="642" y="151.5" width="3" height="1.0" fill="#0000ff"/>
<rect x="649" y="149.0" width="1" height="3.7" fill="#0000ff"/><rect x="648" y="149.0" width="3" height="3.7" fill="#0000ff"/>
<rect x="655" y="152.7" width="1" height="3.7" fill="#ff0000"/><rect x="654" y="152.7" width="3" height="3.7" fill="#ff0000"/>
<rect x="661" y="150.5" width="1" height="5.9" fill="#0000ff"/><rect x="660" y="150.5" width="3" height="2.2" fill="#0000ff"/>
<rect x="667" y="152.7" width="1" height="7.3" fill="#0000ff"/><rect x="666" y="152.7" width="3" height="3.7" fill="#0000ff"/>
<rect x="673" y="152.7" width="1" height="11.0" fill="#0000ff"/><rect x="672" y="155.8" width="3" height="1.0" fill="#0000ff"/>
<rect x="679" y="152.7" width="1" height="11.0" fill="#0000ff"/><rect x="678" y="152.7" width="3" height="7.3" fill="#0000ff"/>
<rect x="685" y="156.4" width="1" height="7.3" fill="#0000ff"/><rect x="684" y="156.4" width="3" height="7.3" fill="#0000ff"/>
<rect x="691" y="157.8" width="1" height="9.5" fill="#ff0000"/><rect x="690" y="157.8" width="3" height="5.9" fill="#ff0000"/>
<rect x="697" y="155.6" width="1" height="3.7" fill="#0000ff"/><rect x="696" y="156.0" width="3" height="2.6" fill="#0000ff"/>
<rect x="703" y="152.7" width="1" height="5.9" fill="#ff0000"/><rect x="702" y="156.4" width="3" height="1.6" fill="#ff0000"/>
<rect x="709" y="152.7" width="1" height="5.9" fill="#ff0000"/><rect x="708" y="156.7" width="3" height="1.3" fill="#ff0000"/>
<rect x="715" y="156.4" width="1" height="7.3" fill="#0000ff"/><rect x="714" y="156.4" width="3" height="3.6" fill="#0000ff"/>
<rect x="721" y="156.7" width="1" height="2.3" fill="#ff0000"/><rect x="720" y="156.7" width="3" height="2.3" fill="#ff0000"/>
<rect x="727" y="156.4" width="1" height="3.6" fill="#0000ff"/><rect x="726" y="155.5" width="3" height="1.4" fill="#0000ff"/>
<rect x="733" y="154.0" width="1" height="4.0" fill="#ff0000"/><rect x="732" y="156.0" width="3" height="2.0" fill="#ff0000"/>
<rect x="739" y="156.4" width="1" height="3.6" fill="#0000ff"/><rect x="738" y="156.0" width="3" height="1.0" fill="#0000ff"/>
<rect x="745" y="155.0" width="1" height="4.0" fill="#ff0000"/><rect x="744" y="156.0" width="3" height="2.0" fill="#ff0000"/>
<rect x="751" y="152.7" width="1" height="6.6" fill="#0000ff"/><rect x="750" y="153.4" width="3" height="3.7" fill="#0000ff"/>
<rect x="757" y="148.3" width="1" height="8.1" fill="#ff0000"/><rect x="756" y="148.3" width="3" height="8.1" fill="#ff0000"/>
<rect x="763" y="148.7" width="1" height="4.7" fill="#0000ff"/><rect x="762" y="148.2" width="3" height="1.0" fill="#0000ff"/>
<rect x="769" y="144.6" width="1" height="8.8" fill="#ff0000"/><rect x="768" y="144.6" width="3" height="8.8" fill="#ff0000"/>
<rect x="775" y="148.7" width="1" height="4.7" fill="#0000ff"/><rect x="774" y="148.2" width="3" height="1.0" fill="#0000ff"/>
<rect x="781" y="147.6" width="1" height="5.8" fill="#0000ff"/><rect x="780" y="148.3" width="3" height="1.5" fill="#0000ff"/>
<rect x="787" y="148.7" width="1" height="4.0" fill="#0000ff"/><rect x="786" y="148.7" width="3" height="4.0" fill="#0000ff"/>
<rect x="793" y="152.0" width="1" height="8.0" fill="#0000ff"/><rect x="792" y="152.0" width="3" height="5.1" fill="#0000ff"/>
<rect x="799" y="154.0" width="1" height="4.0" fill="#ff0000"/><rect x="798" y="156.4" width="3" height="1.6" fill="#ff0000"/>
<rect x="805" y="152.0" width="1" height="8.0" fill="#0000ff"/><rect x="804" y="156.4" width="3" height="3.6" fill="#0000ff"/>
<rect x="811" y="159.3" width="1" height="8.7" fill="#0000ff"/><rect x="810" y="159.3" width="3" height="5.1" fill="#0000ff"/>
<rect x="817" y="163.7" width="1" height="8.0" fill="#0000ff"/><rect x="816" y="167.3" width="3" height="1.0" fill="#0000ff"/>
<rect x="823" y="163.7" width="1" height="8.0" fill="#0000ff"/><rect x="822" y="167.3" width="3" height="4.4" fill="#0000ff"/>
<rect x="829" y="163.7" width="1" height="3.6" fill="#ff0000"/><rect x="828" y="163.7" width="3" height="3.6" fill="#ff0000"/>
<rect x="835" y="163.7" width="1" height="8.0" fill="#0000ff"/><rect x="834" y="166.8" width="3" height="1.0" fill="#0000ff"/>
<rect x="841" y="163.7" width="1" height="8.0" fill="#0000ff"/><rect x="840" y="166.8" width="3" height="1.0" fill="#0000ff"/>
<rect x="847" y="167.3" width="1" height="23.5" fill="#0000ff"/><rect x="846" y="171.0" width="3" height="11.7" fill="#0000ff"/>
<rect x="853" y="171.7" width="1" height="14.7" fill="#ff0000"/><rect x="852" y="175.4" width="3" height="7.3" fill="#ff0000"/>
<rect x="859" y="178.3" width="1" height="31.5" fill="#0000ff"/><rect x="858" y="178.3" width="3" height="27.1" fill="#0000ff"/>
<rect x="865" y="186.4" width="1" height="23.4" fill="#ff0000"/><rect x="864" y="197.3" width="3" height="8.1" fill="#ff0000"/>
<rect x="871" y="186.4" width="1" height="19.0" fill="#ff0000"/><rect x="870" y="188.6" width="3" height="9.4" fill="#ff0000"/>
<rect x="877" y="182.7" width="1" height="11.0" fill="#ff0000"/><rect x="876" y="186.4" width="3" height="3.6" fill="#ff0000"/>
<rect x="883" y="182.0" width="1" height="11.7" fill="#0000ff"/><rect x="882" y="185.9" width="3" height="1.0" fill="#0000ff"/>
<rect x="889" y="182.7" width="1" height="11.0" fill="#ff0000"/><rect x="888" y="182.7" width="3" height="3.7" fill="#ff0000"/>
<rect x="895" y="182.0" width="1" height="15.3" fill="#0000ff"/><rect x="894" y="186.4" width="3" height="3.6" fill="#0000ff"/>
<rect x="901" y="178.3" width="1" height="19.0" fill="#ff0000"/><rect x="900" y="182.0" width="3" height="8.0" fill="#ff0000"/>
<rect x="907" y="178.9" width="1" height="6.6" fill="#0000ff"/><rect x="906" y="182.2" width="3" height="1.0" fill="#0000ff"/>
<rect x="913" y="181.9" width="1" height="8.7" fill="#0000ff"/><rect x="912" y="182.6" width="3" height="3.8" fill="#0000ff"/>
<rect x="919" y="175.4" width="1" height="14.6" fill="#0000ff"/><rect x="918" y="182.6" width="3" height="3.8" fill="#0000ff"/>
<rect x="925" y="182.6" width="1" height="14.7" fill="#0000ff"/><rect x="924" y="186.4" width="3" height="10.9" fill="#0000ff"/>
<rect x="931" y="193.7" width="1" height="19.0" fill="#0000ff"/><rect x="930" y="197.3" width="3" height="8.1" fill="#0000ff"/>
<rect x="937" y="190.6" width="1" height="19.2" fill="#ff0000"/><rect x="936" y="194.4" width="3" height="15.4" fill="#ff0000"/>
<rect x="943" y="175.4" width="1" height="22.2" fill="#ff0000"/><rect x="942" y="182.7" width="3" height="11.7" fill="#ff0000"/>
<rect x="949" y="148.3" width="1" height="34.4" fill="#ff0000"/><rect x="948" y="156.3" width="3" height="26.4" fill="#ff0000"/>
<rect x="955" y="143.1" width="1" height="16.9" fill="#0000ff"/><rect x="954" y="152.0" width="3" height="5.1" fill="#0000ff"/>
<rect x="961" y="150.4" width="1" height="28.5" fill="#0000ff"/><rect x="960" y="156.2" width="3" height="15.4" fill="#0000ff"/>
<rect x="967" y="167.2" width="1" height="38.8" fill="#0000ff"/><rect x="966" y="170.9" width="3" height="30.7" fill="#0000ff"/>
<rect x="973" y="189.9" width="1" height="22.7" fill="#ff0000"/><rect x="972" y="193.6" width="3" height="4.4" fill="#ff0000"/>
<rect x="979" y="185.5" width="1" height="20.5" fill="#ff0000"/><rect x="978" y="185.5" width="3" height="8.1" fill="#ff0000"/>
<rect x="985" y="178.2" width="1" height="19.8" fill="#0000ff"/><rect x="984" y="185.5" width="3" height="8.1" fill="#0000ff"/>
<rect x="991" y="189.9" width="1" height="15.4" fill="#0000ff"/><rect x="990" y="192.8" width="3" height="12.5" fill="#0000ff"/>
<rect x="997" y="197.2" width="1" height="12.5" fill="#ff0000"/><rect x="996" y="200.9" width="3" height="4.4" fill="#ff0000"/>
<rect x="1003" y="193.6" width="1" height="23.4" fill="#0000ff"/><rect x="1002" y="200.9" width="3" height="8.8" fill="#0000ff"/>
<rect x="1009" y="201.6" width="1" height="26.4" fill="#0000ff"/><rect x="1008" y="209.0" width="3" height="12.4" fill="#0000ff"/>
<rect x="1015" y="224.3" width="1" height="15.4" fill="#0000ff"/><rect x="1014" y="224.3" width="3" height="15.4" fill="#0000ff"/>
<rect x="1021" y="219.9" width="1" height="24.1" fill="#ff0000"/><rect x="1020" y="224.3" width="3" height="15.4" fill="#ff0000"/>
<rect x="1027" y="205.3" width="1" height="22.7" fill="#ff0000"/><rect x="1026" y="209.0" width="3" height="15.3" fill="#ff0000"/>
<rect x="1033" y="209.7" width="1" height="10.9" fill="#0000ff"/><rect x="1032" y="209.7" width="3" height="2.9" fill="#0000ff"/>
<rect x="1039" y="197.2" width="1" height="15.4" fill="#ff0000"/><rect x="1038" y="200.9" width="3" height="11.7" fill="#ff0000"/>
<rect x="1045" y="197.2" width="1" height="12.5" fill="#0000ff"/><rect x="1044" y="197.2" width="3" height="8.1" fill="#0000ff"/>
<rect x="1051" y="197.2" width="1" height="19.8" fill="#ff0000"/><rect x="1050" y="200.9" width="3" height="4.4" fill="#ff0000"/>
<rect x="1057" y="197.2" width="1" height="8.1" fill="#0000ff"/><rect x="1056" y="201.1" width="3" height="1.0" fill="#0000ff"/>
<rect x="1063" y="193.6" width="1" height="16.1" fill="#0000ff"/><rect x="1062" y="197.2" width="3" height="4.4" fill="#0000ff"/>
<rect x="1069" y="201.6" width="1" height="19.0" fill="#0000ff"/><rect x="1068" y="201.6" width="3" height="15.4" fill="#0000ff"/>
<rect x="1075" y="212.6" width="1" height="19.0" fill="#0000ff"/><rect x="1074" y="216.3" width="3" height="10.9" fill="#0000ff"/>
<path d="M3 42.5H1.5V47.5H3" fill="none" stroke="#ff0000"/>
<rect x="480" y="103" width="3" height="1" fill="#ff0000"/>
<rect x="6" y="340.8" width="3" height="1.2" fill="#008a00"/>
<rect x="12" y="340.8" width="3" height="1.2" fill="#008a00"/>
<rect x="18" y="340.8" width="3" height="1.2" fill="#008a00"/>
<rect x="24" y="338.8" width="3" height="3.2" fill="#008a00"/>
<rect x="30" y="303.0" width="3" height="39.0" fill="#008a00"/>
<rect x="36" y="309.0" width="3" height="33.0" fill="#008a00"/>
<rect x="42" y="321.0" width="3" height="21.0" fill="#008a00"/>
<rect x="48" y="303.0" width="3" height="39.0" fill="#008a00"/>
<rect x="54" y="316.0" width="3" height="26.0" fill="#008a00"/>
<rect x="60" y="295.0" width="3" height="47.0" fill="#008a00"/>
<rect x="66" y="318.0" width="3" height="24.0" fill="#008a00"/>
<rect x="72" y="327.0" width="3" height="15.0" fill="#008a00"/>
<rect x="78" y="328.0" width="3" height="14.0" fill="#008a00"/>
<rect x="84" y="325.0" width="3" height="17.0" fill="#008a00"/>
<rect x="90" y="324.0" width="3" height="18.0" fill="#008a00"/>
<rect x="96" y="331.0" width="3" height="11.0" fill="#008a00"/>
<rect x="102" y="329.0" width="3" height="13.0" fill="#008a00"/>
<rect x="108" y="327.0" width="3" height="15.0" fill="#008a00"/>
<rect x="114" y="332.0" width="3" height="10.0" fill="#008a00"/>
<rect x="120" y="326.0" width="3" height="16.0" fill="#008a00"/>
<rect x="126" y="335.0" width="3" height="7.0" fill="#008a00"/>
<rect x="132" y="333.0" width="3" height="9.0" fill="#008a00"/>
<rect x="138" y="332.0" width="3" height="10.0" fill="#008a00"/>
<rect x="144" y="332.0" width="3" height="10.0" fill="#008a00"/>
<rect x="150" y="331.0" width="3" height="11.0" fill="#008a00"/>
<rect x="156" y="335.0" width="3" height="7.0" fill="#008a00"/>
<rect x="162" y="333.0" width="3" height="9.0" fill="#008a00"/>
<rect x="168" y="335.0" width="3" height="7.0" fill="#008a00"/>
<rect x="174" y="334.0" width="3" height="8.0" fill="#008a00"/>
<rect x="180" y="331.0" width="3" height="11.0" fill="#008a00"/>
<rect x="186" y="328.0" width="3" height="14.0" fill="#008a00"/>
<rect x="192" y="311.0" width="3" height="31.0" fill="#008a00"/>
<rect x="198" y="331.0" width="3" height="11.0" fill="#008a00"/>
<rect x="204" y="320.0" width="3" height="22.0" fill="#008a00"/>
<rect x="210" y="336.0" width="3" height="6.0" fill="#008a00"/>
<rect x="216" y="337.0" width="3" height="5.0" fill="#008a00"/>
<rect x="222" y="323.0" width="3" height="19.0" fill="#008a00"/>
<rect x="228" y="333.0" width="3" height="9.0" fill="#008a00"/>
<rect x="234" y="332.0" width="3" height="10.0" fill="#008a00"/>
<rect x="240" y="328.0" width="3" height="14.0" fill="#008a00"/>
<rect x="246" y="337.0" width="3" height="5.0" fill="#008a00"/>
<rect x="252" y="327.0" width="3" height="15.0" fill="#008a00"/>
<rect x="258" y="332.0" width="3" height="10.0" fill="#008a00"/>
<rect x="264" y="337.0" width="3" height="5.0" fill="#008a00"/>
<rect x="270" y="334.0" width="3" height="8.0" fill="#008a00"/>
<rect x="276" y="322.0" width="3" height="20.0" fill="#008a00"/>
<rect x="282" y="325.0" width="3" height="17.0" fill="#008a00"/>
<rect x="288" y="327.0" width="3" height="15.0" fill="#008a00"/>
<rect x="294" y="294.0" width="3" height="48.0" fill="#008a00"/>
<rect x="300" y="313.0" width="3" height="29.0" fill="#008a00"/>
<rect x="306" y="318.0" width="3" height="24.0" fill="#008a00"/>
<rect x="312" y="321.0" width="3" height="21.0" fill="#008a00"/>
<rect x="318" y="318.0" width="3" height="24.0" fill="#008a00"/>
<rect x="324" y="323.0" width="3" height="19.0" fill="#008a00"/>
<rect x="330" y="331.0" width="3" height="11.0" fill="#008a00"/>
<rect x="336" y="331.0" width="3" height="11.0" fill="#008a00"/>
<rect x="342" y="324.0" width="3" height="18.0" fill="#008a00"/>
<rect x="348" y="335.0" width="3" height="7.0" fill="#008a00"/>
<rect x="354" y="333.0" width="3" height="9.0" fill="#008a00"/>
<rect x="360" y="274.0" width="3" height="68.0" fill="#008a00"/>
<rect x="366" y="313.0" width="3" height="29.0" fill="#008a00"/>
<rect x="372" y="317.0" width="3" height="25.0" fill="#008a00"/>
<rect x="378" y="324.0" width="3" height="18.0" fill="#008a00"/>
<rect x="384" y="326.0" width="3" height="16.0" fill="#008a00"/>
<rect x="390" y="323.0" width="3" height="19.0" fill="#008a00"/>
<rect x="396" y="333.0" width="3" height="9.0" fill="#008a00"/>
<rect x="402" y="335.0" width="3" height="7.0" fill="#008a00"/>
<rect x="408" y="333.0" width="3" height="9.0" fill="#008a00"/>
<rect x="414" y="296.0" width="3" height="46.0" fill="#008a00"/>
<rect x="420" y="305.0" width="3" height="37.0" fill="#008a00"/>
<rect x="426" y="317.0" width="3" height="25.0" fill="#008a00"/>
<rect x="432" y="327.0" width="3" height="15.0" fill="#008a00"/>
<rect x="438" y="320.0" width="3" height="22.0" fill="#008a00"/>
<rect x="444" y="331.0" width="3" height="11.0" fill="#008a00"/>
<rect x="450" y="333.0" width="3" height="9.0" fill="#008a00"/>
<rect x="456" y="328.0" width="3" height="14.0" fill="#008a00"/>
<rect x="462" y="314.0" width="3" height="28.0" fill="#008a00"/>
<rect x="468" y="326.0" width="3" height="16.0" fill="#008a00"/>
<rect x="480" y="334.0" width="3" height="8.0" fill="#008a00"/>
<rect x="486" y="330.0" width="3" height="12.0" fill="#008a00"/>
<rect x="492" y="329.0" width="3" height="13.0" fill="#008a00"/>
<rect x="498" y="334.0" width="3" height="8.0" fill="#008a00"/>
<rect x="504" y="329.0" width="3" height="13.0" fill="#008a00"/>
<rect x="510" y="334.0" width="3" height="8.0" fill="#008a00"/>
<rect x="516" y="337.0" width="3" height="5.0" fill="#008a00"/>
<rect x="522" y="336.0" width="3" height="6.0" fill="#008a00"/>
<rect x="528" y="341.0" width="3" height="1.0" fill="#008a00"/>
<rect x="534" y="338.0" width="3" height="4.0" fill="#008a00"/>
<rect x="540" y="336.0" width="3" height="6.0" fill="#008a00"/>
<rect x="546" y="340.0" width="3" height="2.0" fill="#008a00"/>
<rect x="552" y="335.0" width="3" height="7.0" fill="#008a00"/>
<rect x="558" y="339.0" width="3" height="3.0" fill="#008a00"/>
<rect x="564" y="341.0" width="3" height="1.0" fill="#008a00"/>
<rect x="570" y="338.0" width="3" height="4.0" fill="#008a00"/>
<rect x="576" y="333.0" width="3" height="9.0" fill="#008a00"/>
<rect x="582" y="338.0" width="3" height="4.0" fill="#008a00"/>
<rect x="588" y="338.0" width="3" height="4.0" fill="#008a00"/>
<rect x="594" y="336.0" width="3" height="6.0" fill="#008a00"/>
<rect x="600" y="339.0" width="3" height="3.0" fill="#008a00"/>
<rect x="606" y="341.0" width="3" height="1.0" fill="#008a00"/>
<rect x="612" y="339.0" width="3" height="3.0" fill="#008a00"/>
<rect x="618" y="339.0" width="3" height="3.0" fill="#008a00"/>
<rect x="624" y="341.0" width="3" height="1.0" fill="#008a00"/>
<rect x="630" y="341.0" width="3" height="1.0" fill="#008a00"/>
<rect x="636" y="340.0" width="3" height="2.0" fill="#008a00"/>
<rect x="642" y="336.0" width="3" height="6.0" fill="#008a00"/>
<rect x="648" y="341.0" width="3" height="1.0" fill="#008a00"/>
<rect x="660" y="341.0" width="3" height="1.0" fill="#008a00"/>
<rect x="666" y="338.0" width="3" height="4.0" fill="#008a00"/>
<rect x="672" y="338.0" width="3" height="4.0" fill="#008a00"/>
<rect x="678" y="339.0" width="3" height="3.0" fill="#008a00"/>
<rect x="684" y="341.0" width="3" height="1.0" fill="#008a00"/>
<rect x="690" y="338.0" width="3" height="4.0" fill="#008a00"/>
<rect x="696" y="339.0" width="3" height="3.0" fill="#008a00"/>
<rect x="702" y="341.0" width="3" height="1.0" fill="#008a00"/>
<rect x="708" y="340.0" width="3" height="2.0" fill="#008a00"/>
<rect x="714" y="340.0" width="3" height="2.0" fill="#008a00"/>
<rect x="720" y="338.0" width="3" height="4.0" fill="#008a00"/>
<rect x="726" y="341.0" width="3" height="1.0" fill="#008a00"/>
<rect x="732" y="341.0" width="3" height="1.0" fill="#008a00"/>
<rect x="750" y="341.0" width="3" height="1.0" fill="#008a00"/>
<rect x="756" y="341.0" width="3" height="1.0" fill="#008a00"/>
<rect x="762" y="340.0" width="3" height="2.0" fill="#008a00"/>
<rect x="768" y="339.0" width="3" height="3.0" fill="#008a00"/>
<rect x="780" y="340.0" width="3" height="2.0" fill="#008a00"/>
<rect x="786" y="341.0" width="3" height="1.0" fill="#008a00"/>
<rect x="792" y="338.0" width="3" height="4.0" fill="#008a00"/>
<rect x="798" y="341.0" width="3" height="1.0" fill="#008a00"/>
<rect x="804" y="340.0" width="3" height="2.0" fill="#008a00"/>
<rect x="810" y="336.0" width="3" height="6.0" fill="#008a00"/>
<rect x="816" y="339.0" width="3" height="3.0" fill="#008a00"/>
<rect x="822" y="341.0" width="3" height="1.0" fill="#008a00"/>
<rect x="828" y="340.0" width="3" height="2.0" fill="#008a00"/>
<rect x="834" y="341.0" width="3" height="1.0" fill="#008a00"/>
<rect x="840" y="340.0" width="3" height="2.0" fill="#008a00"/>
<rect x="846" y="325.0" width="3" height="17.0" fill="#008a00"/>
<rect x="852" y="337.0" width="3" height="5.0" fill="#008a00"/>
<rect x="858" y="327.0" width="3" height="15.0" fill="#008a00"/>
<rect x="864" y="334.0" width="3" height="8.0" fill="#008a00"/>
<rect x="870" y="336.0" width="3" height="6.0" fill="#008a00"/>
<rect x="876" y="338.0" width="3" height="4.0" fill="#008a00"/>
<rect x="882" y="338.0" width="3" height="4.0" fill="#008a00"/>
<rect x="888" y="340.0" width="3" height="2.0" fill="#008a00"/>
<rect x="894" y="337.0" width="3" height="5.0" fill="#008a00"/>
<rect x="900" y="337.0" width="3" height="5.0" fill="#008a00"/>
<rect x="906" y="339.0" width="3" height="3.0" fill="#008a00"/>
<rect x="912" y="341.0" width="3" height="1.0" fill="#008a00"/>
<rect x="918" y="338.0" width="3" height="4.0" fill="#008a00"/>
<rect x="924" y="336.0" width="3" height="6.0" fill="#008a00"/>
<rect x="930" y="327.0" width="3" height="15.0" fill="#008a00"/>
<rect x="936" y="333.0" width="3" height="9.0" fill="#008a00"/>
<rect x="942" y="336.0" width="3" height="6.0" fill="#008a00"/>
<rect x="948" y="327.0" width="3" height="15.0" fill="#008a00"/>
<rect x="954" y="334.0" width="3" height="8.0" fill="#008a00"/>
<rect x="960" y="332.0" width="3" height="10.0" fill="#008a00"/>
<rect x="966" y="328.0" width="3" height="14.0" fill="#008a00"/>
<rect x="972" y="331.0" width="3" height="11.0" fill="#008a00"/>
<rect x="978" y="335.0" width="3" height="7.0" fill="#008a00"/>
<rect x="984" y="336.0" width="3" height="6.0" fill="#008a00"/>
<rect x="990" y="335.0" width="3" height="7.0" fill="#008a00"/>
<rect x="996" y="337.0" width="3" height="5.0" fill="#008a00"/>
<rect x="1002" y="335.0" width="3" height="7.0" fill="#008a00"/>
<rect x="1008" y="330.0" width="3" height="12.0" fill="#008a00"/>
<rect x="1014" y="330.0" width="3" height="12.0" fill="#008a00"/>
<rect x="1020" y="330.0" width="3" height="12.0" fill="#008a00"/>
<rect x="1026" y="333.0" width="3" height="9.0" fill="#008a00"/>
<rect x="1032" y="336.0" width="3" height="6.0" fill="#008a00"/>
<rect x="1038" y="336.0" width="3" height="6.0" fill="#008a00"/>
<rect x="1044" y="337.0" width="3" height="5.0" fill="#008a00"/>
<rect x="1050" y="334.0" width="3" height="8.0" fill="#008a00"/>
<rect x="1056" y="339.0" width="3" height="3.0" fill="#008a00"/>
<rect x="1062" y="336.0" width="3" height="6.0" fill="#008a00"/>
<rect x="1068" y="336.0" width="3" height="6.0" fill="#008a00"/>
<rect x="1074" y="337.0" width="3" height="5.0" fill="#008a00"/>
<line x1="1" y1="399.5" x2="1079" y2="399.5" stroke="#787878" stroke-width="1"/>
<path d="M1.5 394V400M7.5 394V400M13.5 396V400M19.5 396V400M25.5 396V400M31.5 399V404M37.5 399V408M43.5 399V412M49.5 399V415M55.5 399V415M61.5 399V417M67.5 399V416M73.5 399V414M79.5 399V412M85.5 399V411M91.5 399V410M97.5 399V409M103.5 399V408M109.5 399V406M115.5 399V402M121.5 399V400M127.5 397V400M133.5 394V400M139.5 394V400M145.5 394V400M151.5 394V400M157.5 394V400M163.5 394V400M169.5 394V400M175.5 394V400M181.5 396V400M187.5 398V400M193.5 399V402M199.5 399V406M205.5 399V408M211.5 399V408M217.5 399V408M223.5 399V410M229.5 399V409M235.5 399V404M247.5 398V400M253.5 396V400M259.5 396V400M265.5 394V400M271.5 392V400M277.5 389V400M283.5 387V400M289.5 385V400M295.5 382V400M301.5 381V400M307.5 380V400M313.5 380V400M319.5 382V400M325.5 384V400M331.5 386V400M337.5 388V400M343.5 391V400M349.5 393V400M355.5 395V400M361.5 399V400M373.5 399V401M379.5 399V402M385.5 399V404M391.5 399V405M397.5 399V405M403.5 399V404M409.5 399V404M415.5 399V411M421.5 399V413M427.5 399V413M433.5 399V412M439.5 399V411M445.5 399V409M451.5 399V407M457.5 399V407M463.5 399V406M469.5 399V400M475.5 397V400M481.5 393V400M487.5 393V400M493.5 394V400M499.5 395V400M505.5 397V400M511.5 399V400M523.5 399V400M529.5 399V400M535.5 399V400M541.5 399V400M547.5 399V400M571.5 399V400M577.5 399V401M583.5 399V401M589.5 399V401M595.5 399V400M601.5 399V400M607.5 399V400M613.5 397V400M619.5 398V400M625.5 396V400M631.5 396V400M637.5 396V400M643.5 398V400M649.5 398V400M655.5 398V400M661.5 398V400M667.5 399V400M673.5 399V400M685.5 399V400M703.5 399V400M709.5 399V400M715.5 399V400M721.5 398V400M727.5 398V400M733.5 398V400M739.5 398V400M745.5 398V400M751.5 398V400M757.5 397V400M763.5 396V400M769.5 394V400M775.5 396V400M781.5 396V400M787.5 397V400M793.5 398V400M799.5 399V400M811.5 399V401M817.5 399V401M823.5 399V402M829.5 399V402M835.5 399V402M841.5 399V401M847.5 399V404M853.5 399V404M859.5 399V407M865.5 399V408M871.5 399V407M877.5 399V406M883.5 399V404M889.5 399V401M895.5 399V401M907.5 399V400M913.5 399V400M919.5 398V400M925.5 399V400M931.5 399V400M943.5 398V400M949.5 393V400M955.5 390V400M961.5 390V400M967.5 395V400M973.5 398V400M979.5 398V400M985.5 399V400M991.5 399V401M997.5 399V401M1003.5 399V404M1009.5 399V406M1015.5 399V408M1021.5 399V408M1027.5 399V404M1033.5 399V404M1045.5 399V400M1051.5 397V400M1057.5 396V400M1063.5 394V400M1069.5 396V400" stroke="#ff0000" stroke-width="1" fill="none"/>
<polyline points="0.5,384.5 12.5,382.5 25.5,381.5 30.5,388.5 41.5,398.5 51.5,412.5 59.5,420.5 69.5,426.5 82.5,429.5 94.5,433.5 106.5,435.5 112.5,434.5 123.5,428.5 131.5,423.5 143.5,418.5 159.5,415.5 174.5,412.5 184.5,414.5 190.5,418.5 200.5,427.5 215.5,433.5 223.5,438.5 228.5,440.5 235.5,436.5 248.5,429.5 260.5,427.5 268.5,422.5 280.5,412.5 288.5,405.5 296.5,394.5 304.5,387.5 313.5,378.5 327.5,374.5 352.5,374.5 357.5,377.5 361.5,382.5 368.5,381.5 380.5,386.5 388.5,391.5 405.5,393.5 411.5,397.5 417.5,406.5 425.5,413.5 438.5,417.5 450.5,419.5 462.5,421.5 469.5,417.5 479.5,406.5 485.5,404.5 501.5,404.5 511.5,406.5 524.5,410.5 536.5,411.5 568.5,411.5 574.5,413.5 583.5,414.5 601.5,414.5 609.5,411.5 622.5,409.5 628.5,407.5 675.5,407.5 683.5,409.5 699.5,409.5 708.5,407.5 722.5,407.5 730.5,405.5 740.5,404.5 753.5,403.5 761.5,400.5 771.5,398.5 781.5,397.5 792.5,398.5 804.5,400.5 810.5,401.5 822.5,405.5 840.5,407.5 853.5,411.5 861.5,417.5 871.5,421.5 883.5,420.5 898.5,418.5 912.5,415.5 922.5,415.5 930.5,418.5 938.5,418.5 945.5,414.5 953.5,403.5 960.5,401.5 969.5,405.5 982.5,406.5 994.5,411.5 1004.5,415.5 1015.5,423.5 1021.5,425.5 1035.5,422.5 1049.5,416.5 1064.5,412.5 1074.5,414.5 1079.5,417.5" fill="none" stroke="#ffff00" stroke-width="1" shape-rendering="crispEdges"/>
<polyline points="0.5,388.5 25.5,384.5 41.5,389.5 55.5,398.5 73.5,412.5 92.5,421.5 106.5,427.5 114.5,429.5 123.5,429.5 143.5,424.5 164.5,419.5 174.5,417.5 188.5,416.5 205.5,421.5 217.5,425.5 229.5,431.5 235.5,432.5 248.5,432.5 260.5,430.5 270.5,427.5 282.5,422.5 294.5,416.5 306.5,405.5 313.5,399.5 323.5,392.5 335.5,386.5 343.5,382.5 352.5,380.5 368.5,380.5 380.5,382.5 393.5,386.5 409.5,388.5 419.5,394.5 427.5,399.5 438.5,405.5 450.5,410.5 462.5,414.5 469.5,415.5 483.5,411.5 495.5,408.5 526.5,408.5 536.5,410.5 544.5,410.5 568.5,410.5 570.5,411.5 581.5,412.5 593.5,413.5 607.5,413.5 609.5,412.5 622.5,411.5 630.5,410.5 640.5,409.5 652.5,408.5 724.5,408.5 726.5,407.5 740.5,406.5 742.5,405.5 753.5,405.5 761.5,404.5 771.5,402.5 783.5,400.5 796.5,400.5 810.5,399.5 822.5,402.5 842.5,404.5 861.5,410.5 881.5,416.5 896.5,417.5 912.5,416.5 933.5,416.5 939.5,417.5 949.5,415.5 959.5,411.5 971.5,408.5 994.5,408.5 1004.5,411.5 1019.5,415.5 1031.5,419.5 1045.5,419.5 1055.5,417.5 1068.5,415.5 1079.5,415.5" fill="none" stroke="#0000ff" stroke-width="1" shape-rendering="crispEdges"/>
<line x1="1" y1="488.5" x2="1079" y2="488.5" stroke="#0000ff" stroke-width="1"/>
<line x1="1" y1="530.5" x2="1079" y2="530.5" stroke="#ff0000" stroke-width="1"/>
<polyline points="0.5,483.5 8.5,479.5 15.5,477.5 24.5,477.5 30.5,488.5 36.5,501.5 42.5,519.5 48.5,529.5 55.5,535.5 61.5,536.5 69.5,532.5 77.5,529.5 86.5,528.5 94.5,531.5 102.5,533.5 108.5,534.5 115.5,531.5 123.5,522.5 131.5,507.5 138.5,496.5 145.5,493.5 153.5,496.5 161.5,498.5 170.5,498.5 176.5,497.5 182.5,502.5 188.5,511.5 194.5,522.5 201.5,531.5 209.5,533.5 217.5,532.5 225.5,534.5 230.5,536.5 236.5,532.5 241.5,525.5 248.5,519.5 256.5,515.5 264.5,513.5 271.5,504.5 277.5,498.5 284.5,488.5 290.5,483.5 296.5,481.5 304.5,481.5 314.5,479.5 323.5,480.5 335.5,483.5 347.5,485.5 355.5,487.5 360.5,496.5 367.5,503.5 374.5,507.5 379.5,507.5 386.5,513.5 395.5,518.5 403.5,518.5 410.5,519.5 416.5,523.5 423.5,528.5 430.5,528.5 439.5,526.5 448.5,523.5 456.5,522.5 463.5,522.5 469.5,519.5 475.5,512.5 481.5,500.5 488.5,492.5 493.5,491.5 499.5,494.5 507.5,502.5 516.5,513.5 524.5,519.5 534.5,524.5 540.5,524.5 548.5,525.5 558.5,529.5 570.5,534.5 581.5,535.5 589.5,531.5 597.5,525.5 605.5,520.5 613.5,510.5 622.5,502.5 628.5,499.5 636.5,498.5 644.5,502.5 654.5,507.5 665.5,509.5 675.5,516.5 683.5,524.5 691.5,530.5 699.5,528.5 710.5,519.5 720.5,512.5 732.5,506.5 740.5,503.5 751.5,498.5 761.5,488.5 769.5,480.5 775.5,479.5 781.5,481.5 788.5,487.5 795.5,495.5 804.5,516.5 810.5,524.5 817.5,530.5 824.5,533.5 834.5,534.5 846.5,533.5 857.5,530.5 867.5,531.5 875.5,528.5 883.5,522.5 892.5,517.5 900.5,513.5 908.5,510.5 918.5,507.5 924.5,511.5 932.5,517.5 937.5,520.5 943.5,514.5 949.5,503.5 955.5,494.5 960.5,491.5 967.5,497.5 974.5,508.5 980.5,516.5 988.5,520.5 996.5,525.5 1004.5,531.5 1012.5,535.5 1020.5,537.5 1027.5,533.5 1035.5,526.5 1045.5,517.5 1053.5,510.5 1062.5,503.5 1068.5,502.5 1074.5,504.5 1079.5,510.5" fill="none" stroke="#ff0000" stroke-width="1" shape-rendering="crispEdges"/>
<polyline points="0.5,479.5 6.5,476.5 13.5,475.5 19.5,479.5 24.5,476.5 27.5,490.5 31.5,512.5 36.5,521.5 43.5,532.5 50.5,537.5 55.5,535.5 60.5,536.5 69.5,529.5 77.5,527.5 84.5,529.5 92.5,533.5 98.5,533.5 103.5,536.5 111.5,530.5 117.5,521.5 125.5,504.5 133.5,493.5 143.5,493.5 151.5,498.5 156.5,500.5 161.5,497.5 168.5,496.5 174.5,498.5 180.5,508.5 188.5,522.5 193.5,530.5 199.5,535.5 207.5,534.5 213.5,534.5 217.5,532.5 223.5,538.5 228.5,538.5 234.5,525.5 240.5,518.5 247.5,514.5 254.5,513.5 259.5,515.5 265.5,511.5 271.5,494.5 278.5,490.5 284.5,483.5 289.5,480.5 295.5,480.5 300.5,482.5 306.5,480.5 313.5,478.5 319.5,481.5 327.5,482.5 339.5,484.5 347.5,486.5 355.5,488.5 361.5,514.5 367.5,504.5 374.5,507.5 379.5,509.5 385.5,520.5 392.5,519.5 398.5,519.5 403.5,517.5 410.5,520.5 415.5,531.5 421.5,531.5 427.5,527.5 434.5,525.5 439.5,525.5 445.5,522.5 451.5,520.5 457.5,523.5 462.5,526.5 469.5,510.5 475.5,500.5 481.5,488.5 488.5,493.5 493.5,495.5 498.5,499.5 505.5,508.5 511.5,515.5 518.5,520.5 524.5,523.5 534.5,525.5 540.5,525.5 548.5,527.5 556.5,531.5 564.5,535.5 571.5,537.5 578.5,533.5 588.5,529.5 595.5,521.5 601.5,523.5 607.5,514.5 613.5,498.5 619.5,505.5 626.5,496.5 631.5,496.5 636.5,502.5 644.5,506.5 654.5,507.5 662.5,510.5 668.5,515.5 674.5,518.5 680.5,525.5 685.5,535.5 691.5,529.5 697.5,527.5 704.5,518.5 710.5,513.5 715.5,515.5 722.5,507.5 732.5,503.5 739.5,503.5 747.5,496.5 752.5,494.5 757.5,484.5 763.5,479.5 769.5,476.5 775.5,482.5 781.5,485.5 788.5,494.5 796.5,510.5 805.5,530.5 810.5,531.5 817.5,532.5 823.5,539.5 829.5,531.5 836.5,533.5 846.5,533.5 853.5,526.5 859.5,533.5 866.5,531.5 873.5,524.5 881.5,519.5 889.5,514.5 896.5,514.5 902.5,507.5 907.5,506.5 913.5,508.5 919.5,507.5 924.5,517.5 931.5,524.5 937.5,518.5 943.5,503.5 950.5,491.5 955.5,488.5 961.5,493.5 967.5,512.5 974.5,518.5 980.5,517.5 986.5,521.5 992.5,528.5 1000.5,531.5 1008.5,535.5 1016.5,539.5 1021.5,534.5 1027.5,527.5 1035.5,523.5 1043.5,515.5 1051.5,506.5 1058.5,502.5 1063.5,500.5 1069.5,505.5 1074.5,513.5 1079.5,518.5" fill="none" stroke="#0000ff" stroke-width="1" shape-rendering="crispEdges"/>
</g>
<rect x="0" y="21" width="1" height="536" fill="#000" />
<line x1="0" y1="556.5" x2="1141" y2="556.5" stroke="#000" stroke-width="1" />
<line x1="1079.5" y1="21" x2="1079.5" y2="581" stroke="#000" stroke-width="1" />
<line x1="0" y1="342.5" x2="1079" y2="342.5" stroke="#000" stroke-width="1" />
<line x1="1079" y1="39.5" x2="1084" y2="39.5" stroke="#000" stroke-width="1" />
<text y="45" fill="#000" xml:space="preserve"><tspan class="dg" x="1091 1097 1103 1109 1115 1121">14,035</tspan></text>
<line x1="1079" y1="76.5" x2="1084" y2="76.5" stroke="#000" stroke-width="1" />
<text y="82" fill="#000" xml:space="preserve"><tspan class="dg" x="1091 1097 1103 1109 1115 1121">13,985</tspan></text>
<line x1="1079" y1="114.5" x2="1084" y2="114.5" stroke="#000" stroke-width="1" />
<text y="120" fill="#000" xml:space="preserve"><tspan class="dg" x="1091 1097 1103 1109 1115 1121">13,935</tspan></text>
<line x1="1079" y1="152.5" x2="1084" y2="152.5" stroke="#000" stroke-width="1" />
<text y="158" fill="#000" xml:space="preserve"><tspan class="dg" x="1091 1097 1103 1109 1115 1121">13,885</tspan></text>
<line x1="1079" y1="190.5" x2="1084" y2="190.5" stroke="#000" stroke-width="1" />
<text y="196" fill="#000" xml:space="preserve"><tspan class="dg" x="1091 1097 1103 1109 1115 1121">13,835</tspan></text>
<line x1="1079" y1="227.5" x2="1084" y2="227.5" stroke="#000" stroke-width="1" />
<text y="233" fill="#000" xml:space="preserve"><tspan class="dg" x="1091 1097 1103 1109 1115 1121">13,785</tspan></text>
<line x1="1079" y1="274.5" x2="1084" y2="274.5" stroke="#000" stroke-width="1" />
<text y="280" fill="#000" xml:space="preserve"><tspan class="dg" x="1091 1097 1103 1109 1115 1121">440.00</tspan></text>
<line x1="1079" y1="311.5" x2="1084" y2="311.5" stroke="#000" stroke-width="1" />
<text y="317" fill="#000" xml:space="preserve"><tspan class="dg" x="1091 1097 1103 1109 1115 1121">200.00</tspan></text>
<line x1="1079" y1="374.5" x2="1084" y2="374.5" stroke="#000" stroke-width="1" />
<text y="380" fill="#000" xml:space="preserve"><tspan class="dg" x="1091 1097 1103 1109 1115">15.00</tspan></text>
<line x1="1079" y1="411.5" x2="1084" y2="411.5" stroke="#000" stroke-width="1" />
<text y="417" fill="#000" xml:space="preserve"><tspan class="dg" x="1091 1097 1103 1109 1115">-7.50</tspan></text>
<line x1="1079" y1="474.5" x2="1084" y2="474.5" stroke="#000" stroke-width="1" />
<text y="480" fill="#000" xml:space="preserve"><tspan class="dg" x="1091 1097 1103 1109 1115 1121">100.00</tspan></text>
<line x1="1079" y1="512.5" x2="1084" y2="512.5" stroke="#000" stroke-width="1" />
<text y="518" fill="#000" xml:space="preserve"><tspan class="dg" x="1091 1097 1103 1109 1115">45.00</tspan></text>
<line x1="7.5" y1="556" x2="7.5" y2="561" stroke="#000" stroke-width="1" />
<text y="576" fill="#000" xml:space="preserve"><tspan class="dg" x="9 15 21 27 33">02:40</tspan></text>
<line x1="55.5" y1="556" x2="55.5" y2="561" stroke="#000" stroke-width="1" />
<text y="576" fill="#000" xml:space="preserve"><tspan class="dg" x="57 63 69 75 81">09:20</tspan></text>
<line x1="151.5" y1="556" x2="151.5" y2="561" stroke="#000" stroke-width="1" />
<text y="576" fill="#000" xml:space="preserve"><tspan class="dg" x="153 159 165 171 177">10:40</tspan></text>
<line x1="247.5" y1="556" x2="247.5" y2="561" stroke="#000" stroke-width="1" />
<text y="576" fill="#000" xml:space="preserve"><tspan class="dg" x="249 255 261 267 273">12:00</tspan></text>
<line x1="343.5" y1="556" x2="343.5" y2="561" stroke="#000" stroke-width="1" />
<text y="576" fill="#000" xml:space="preserve"><tspan class="dg" x="345 351 357 363 369">13:20</tspan></text>
<line x1="439.5" y1="556" x2="439.5" y2="561" stroke="#000" stroke-width="1" />
<text y="576" fill="#000" xml:space="preserve"><tspan class="dg" x="441 447 453 459 465">14:40</tspan></text>
<line x1="547.5" y1="556" x2="547.5" y2="561" stroke="#000" stroke-width="1" />
<text y="576" fill="#000" xml:space="preserve"><tspan class="dg" x="549 555 561 567 573">17:20</tspan></text>
<line x1="643.5" y1="556" x2="643.5" y2="561" stroke="#000" stroke-width="1" />
<text y="576" fill="#000" xml:space="preserve"><tspan class="dg" x="645 651 657 663 669">18:40</tspan></text>
<line x1="739.5" y1="556" x2="739.5" y2="561" stroke="#000" stroke-width="1" />
<text y="576" fill="#000" xml:space="preserve"><tspan class="dg" x="741 747 753 759 765">20:00</tspan></text>
<line x1="835.5" y1="556" x2="835.5" y2="561" stroke="#000" stroke-width="1" />
<text y="576" fill="#000" xml:space="preserve"><tspan class="dg" x="837 843 849 855 861">21:20</tspan></text>
<line x1="931.5" y1="556" x2="931.5" y2="561" stroke="#000" stroke-width="1" />
<text y="576" fill="#000" xml:space="preserve"><tspan class="dg" x="933 939 945 951 957">22:40</tspan></text>
<line x1="1027.5" y1="556" x2="1027.5" y2="565" stroke="#000" stroke-width="1" />
<text y="576" fill="#000" xml:space="preserve"><tspan class="dg" x="1029 1035 1041 1047 1053">04/27</tspan></text>
<rect x="1082.5" y="339.5" width="39" height="14" fill="#fff" stroke="#000" />
<text y="351" xml:space="preserve"><tspan x="1085" style="font-size:17px" dy="1">×</tspan><tspan class="dg" x="1105 1111 1117" dy="-1">100</tspan></text>
<rect x="1127" y="23" width="14" height="13" fill="#fff" />
<path d="M1141 23.5H1127.5V35.5H1141" fill="none" stroke="#a0a0a0"/>
<polygon points="1130,27.5 1140,27.5 1135,32.5" fill="#808080" stroke="#222" stroke-width="1" shape-rendering="auto"/>
<rect x="1127" y="258" width="14" height="13" fill="#fff" />
<path d="M1141 258.5H1127.5V270.5H1141" fill="none" stroke="#a0a0a0"/>
<polygon points="1130,262.5 1140,262.5 1135,267.5" fill="#808080" stroke="#222" stroke-width="1" shape-rendering="auto"/>
<rect x="1127" y="358" width="14" height="13" fill="#fff" />
<path d="M1141 358.5H1127.5V370.5H1141" fill="none" stroke="#a0a0a0"/>
<polygon points="1130,362.5 1140,362.5 1135,367.5" fill="#808080" stroke="#222" stroke-width="1" shape-rendering="auto"/>
<rect x="1127" y="458" width="14" height="13" fill="#fff" />
<path d="M1141 458.5H1127.5V470.5H1141" fill="none" stroke="#a0a0a0"/>
<polygon points="1130,462.5 1140,462.5 1135,467.5" fill="#808080" stroke="#222" stroke-width="1" shape-rendering="auto"/>
<text y="34" fill="#000" xml:space="preserve"><tspan x="4">日経</tspan><tspan class="dg" x="31 37 43">225</tspan><tspan x="46" textLength="24" lengthAdjust="spacingAndGlyphs">mini</tspan><tspan class="dg" x="73 79 85 91 97 103 109 115 121"> 13/06( 5</tspan><tspan x="124">分</tspan><tspan class="dg" x="139 145 151 157 163 169 175 181 187 193 199 205 211 217 223 229 235 241 247 253 259 265 271 277 283 289 295">, 2013/04/25 - 2013/04/30 )</tspan></text>
<text y="34" fill="#000" xml:space="preserve"><tspan x="318">一目均衡表</tspan><tspan class="dg" x="381 387 393 399 405 411 417 423 429 435 441 447 453">( 9, 26, 52 )</tspan></text>
<text y="34" fill="#000" xml:space="preserve"><tspan x="476">移動平均</tspan><tspan class="dg" x="527 533">( </tspan><tspan x="536" textLength="30" lengthAdjust="spacingAndGlyphs">Close</tspan><tspan class="dg" x="569 575 581 587 593 599 605">, 150 )</tspan></text>
<text y="34" fill="#000" xml:space="preserve"><tspan x="628">移動平均</tspan><tspan class="dg" x="679 685">( </tspan><tspan x="688" textLength="30" lengthAdjust="spacingAndGlyphs">Close</tspan><tspan class="dg" x="721 727 733 739 745 751">, 10 )</tspan></text>
<text y="34" fill="#000" xml:space="preserve"><tspan x="774">移動平均</tspan><tspan class="dg" x="825 831">( </tspan><tspan x="834" textLength="30" lengthAdjust="spacingAndGlyphs">Close</tspan><tspan class="dg" x="867 873 879 885 891 897">, 25 )</tspan></text>
<text y="34" fill="#000" xml:space="preserve"><tspan x="920">移動平均</tspan><tspan class="dg" x="971 977">( </tspan><tspan x="980" textLength="30" lengthAdjust="spacingAndGlyphs">Close</tspan><tspan class="dg" x="1013 1019 1025 1031 1037 1043">, 20 )</tspan></text>
<text y="48" fill="#000" xml:space="preserve"><tspan x="4">移動平均</tspan><tspan class="dg" x="55 61">( </tspan><tspan x="64" textLength="30" lengthAdjust="spacingAndGlyphs">Close</tspan><tspan class="dg" x="97 103 109 115 121 127">, 75 )</tspan></text>
<text y="48" fill="#000" xml:space="preserve"><tspan x="150">移動平均</tspan><tspan class="dg" x="201 207">( </tspan><tspan x="210" textLength="30" lengthAdjust="spacingAndGlyphs">Close</tspan><tspan class="dg" x="243 249 255 261 267">, 5 )</tspan></text>
<text y="48" fill="#000" xml:space="preserve"><tspan x="290">移動平均</tspan><tspan class="dg" x="341 347">( </tspan><tspan x="350" textLength="30" lengthAdjust="spacingAndGlyphs">Close</tspan><tspan class="dg" x="383 389 395 401 407 413">, 75 )</tspan></text>
<text y="48" fill="#000" xml:space="preserve"><tspan x="436">移動平均</tspan><tspan class="dg" x="487 493">( </tspan><tspan x="496" textLength="30" lengthAdjust="spacingAndGlyphs">Close</tspan><tspan class="dg" x="529 535 541 547 553 559">, 40 )</tspan></text>
<text y="269" fill="#000" xml:space="preserve"><tspan x="4">出来高</tspan></text>
<text y="369" fill="#000" xml:space="preserve"><tspan x="4" textLength="24" lengthAdjust="spacingAndGlyphs">MACD</tspan><tspan class="dg" x="31 37 43 49 55 61 67 73 79 85 91 97 103">( 12, 26, 9 )</tspan></text>
<text y="469" fill="#000" xml:space="preserve"><tspan x="4">スロー・ストキャスティクス</tspan><tspan class="dg" x="163 169 175 181 187 193 199 205 211 217 223 229 235 241 247 253 259">( 14, 3, 80, 20 )</tspan></text>
</svg></body></html>
